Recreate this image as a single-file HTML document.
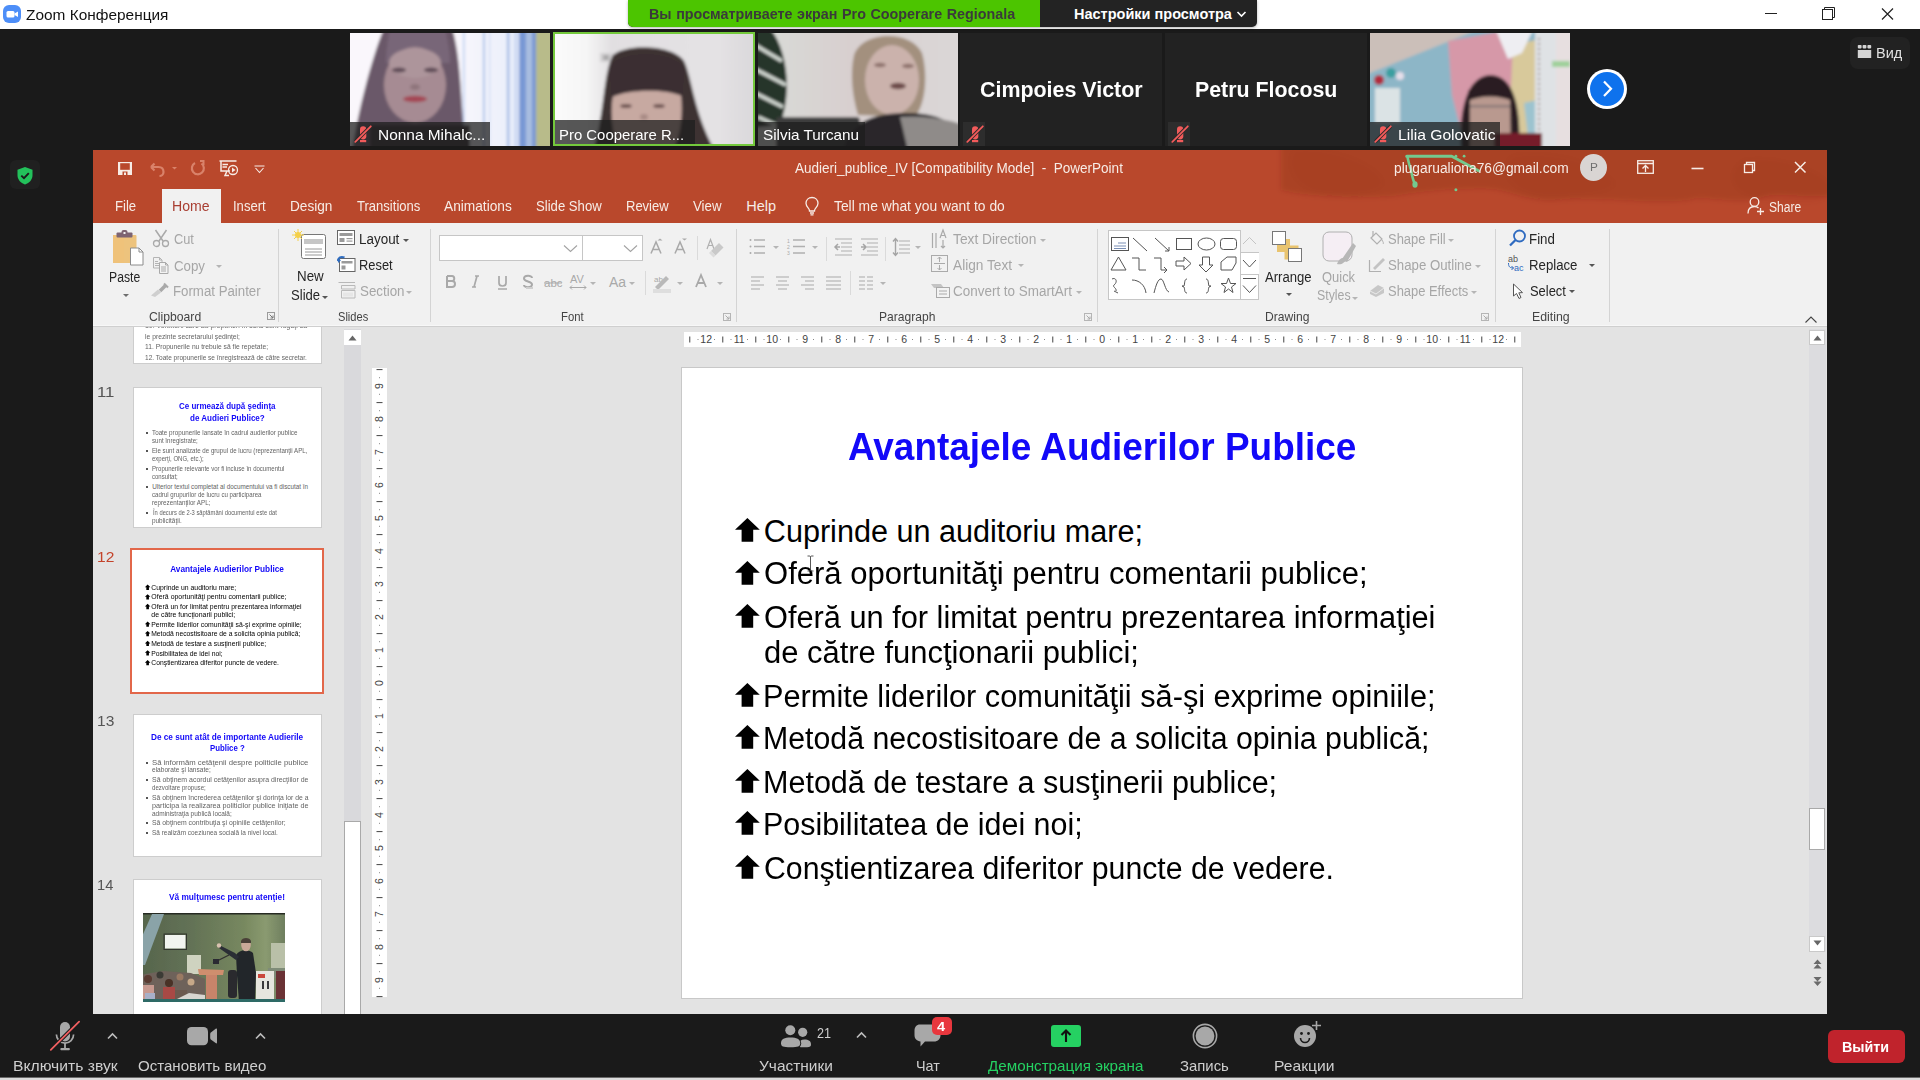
<!DOCTYPE html>
<html><head><meta charset="utf-8">
<style>
*{margin:0;padding:0;box-sizing:border-box}
html,body{width:1920px;height:1080px;overflow:hidden;background:#1a1a1a;font-family:"Liberation Sans",sans-serif}
.a{position:absolute}
.t{position:absolute;white-space:nowrap;line-height:1;transform-origin:0 0}
svg{position:absolute;overflow:visible}
.tile{position:absolute;top:33px;width:200px;height:113px;overflow:hidden;background:#222}
.nlab{position:absolute;left:0;bottom:0;height:24px;background:rgba(30,30,30,.74)}
</style></head><body>
<div class="a" style="left:0;top:0;width:1920px;height:29px;background:#fff"></div>
<div class="a" style="left:3px;top:5px;width:18px;height:18px;border-radius:6px;background:#4d8ef8"></div>
<svg style="left:3px;top:5px" width="18" height="18"><rect x="3.5" y="6" width="8" height="6.5" rx="1.5" fill="#fff"/><path d="M11.5 8.5 L15 6.5 V12 L11.5 10 Z" fill="#fff"/></svg>
<svg style="left:1760px;top:0" width="160" height="29">
 <path d="M5 13.5 H17" stroke="#222" stroke-width="1"/>
 <rect x="62.5" y="9.5" width="10" height="10" fill="none" stroke="#222" stroke-width="1"/>
 <path d="M64.5 9.5 V7.5 H74.5 V17.5 H72.5" fill="none" stroke="#222" stroke-width="1"/>
 <path d="M122 8.5 L133 19.5 M133 8.5 L122 19.5" stroke="#222" stroke-width="1.2"/>
</svg>
<div class="a" style="left:628px;top:0;width:629px;height:27px;border-radius:0 0 5px 5px;background:#232323;box-shadow:0 1px 3px rgba(0,0,0,.3)"></div>
<div class="a" style="left:628px;top:0;width:412px;height:27px;border-radius:0 0 0 5px;background:#4cc500"></div>
<svg style="left:1236px;top:10px" width="12" height="8"><path d="M1.5 2 L5.5 6 L9.5 2" fill="none" stroke="#fff" stroke-width="1.6"/></svg>
<div class="t" id="t0" style="left:25.99px;top:7.38px;font-size:15.50px;color:#111;font-weight:normal;transform:scaleX(0.9943);">Zoom Конференция</div><div class="t" id="t1" style="left:649.05px;top:6.30px;font-size:15.00px;color:#3a3a3a;font-weight:bold;transform:scaleX(0.9556);white-space:pre;word-spacing:0.6px;">Вы просматриваете экран Pro Cooperare Regionala</div><div class="t" id="t2" style="left:1073.99px;top:6.73px;font-size:14.50px;color:#fff;font-weight:bold;">Настройки просмотра</div>
<div class="tile" style="left:350px;background:#f9f6fb">
 <svg style="left:0;top:0" width="200" height="113"><defs><filter id="bl1" x="-5%" y="-5%" width="110%" height="110%"><feGaussianBlur stdDeviation="1.4"/></filter><linearGradient id="g1" x1="0" x2="1"><stop offset="0" stop-color="#f8f6fc"/><stop offset="0.6" stop-color="#eef1fb"/><stop offset="1" stop-color="#dfe8f8"/></linearGradient></defs>
 <g filter="url(#bl1)">
 <rect x="-5" y="-5" width="210" height="123" fill="#faf7fc"/>
 <rect x="108" y="-5" width="70" height="123" fill="url(#g1)"/>
 <rect x="113" y="-5" width="1.6" height="123" fill="#b9cdf0"/><rect x="133" y="-5" width="2" height="123" fill="#a9c1ea"/><rect x="139" y="-5" width="1.2" height="123" fill="#c9d8f4"/>
 <rect x="157" y="-5" width="2.2" height="123" fill="#9db6e4"/><rect x="165" y="-5" width="1.6" height="123" fill="#b3c6ec"/>
 <rect x="169" y="-5" width="18" height="123" fill="#7898d4"/><rect x="176" y="-5" width="6" height="123" fill="#a9bde0"/>
 <rect x="186" y="-5" width="20" height="123" fill="#b8bb8a"/>
 <path d="M34 -5 L102 -5 C110 20 111 60 115 118 L2 118 C8 80 20 30 34 -5 Z" fill="#6b5869"/>
 <path d="M40 -5 L95 -5 C98 10 100 20 100 30 L36 30 C36 18 38 8 40 -5Z" fill="#786678"/>
 <ellipse cx="65" cy="52" rx="31" ry="38" fill="#a68b93"/>
 <ellipse cx="65" cy="30" rx="26" ry="15" fill="#ad959b"/>
 <ellipse cx="49" cy="37" rx="7" ry="2.5" fill="#5f4b56"/><ellipse cx="81" cy="37" rx="7" ry="2.5" fill="#5f4b56"/>
 <ellipse cx="65" cy="54" rx="5" ry="3" fill="#8e747c"/>
 <ellipse cx="65" cy="66" rx="12" ry="3.2" fill="#a44755"/>
 <rect x="20" y="92" width="100" height="26" fill="#3c3037"/>
 </g></svg>
 <div class="nlab" style="width:140px"></div>
 <svg style="left:3px;top:92px" width="22" height="22"><rect x="7" y="1.2" width="6.3" height="13.2" rx="3.15" fill="#f25b5b"/><rect x="7" y="15" width="6.2" height="2.2" fill="#f25b5b"/><path d="M2.3 16.8 L17.8 1.3" stroke="#2a2a2a" stroke-width="3.6"/><path d="M2.3 16.8 L17.8 1.3" stroke="#f25b5b" stroke-width="1.8" stroke-linecap="round"/></svg>
</div>
<div class="tile" style="left:553px;width:202px;height:114px;top:32px;border:2px solid #74c93c;background:#e3e0e3">
 <svg style="left:-2px;top:-1px" width="202" height="114"><defs><filter id="bl2" x="-5%" y="-5%" width="110%" height="110%"><feGaussianBlur stdDeviation="1.5"/></filter><linearGradient id="g2" x1="0" x2="1"><stop offset="0" stop-color="#fbfbfb"/><stop offset="0.18" stop-color="#f6f6f6"/><stop offset="0.3" stop-color="#e1dfe1"/><stop offset="0.8" stop-color="#e4e2e4"/><stop offset="1" stop-color="#d9d7da"/></linearGradient></defs>
 <g filter="url(#bl2)">
 <rect x="-5" y="-5" width="212" height="124" fill="url(#g2)"/>
 <rect x="47" y="20" width="13" height="9" fill="#d3d1d3"/><rect x="50" y="22" width="6" height="5" fill="#a9a7a9"/>
 <path d="M60 22 C75 10 120 12 131 28 C139 45 141 80 162 118 L40 118 C52 80 50 40 60 22 Z" fill="#3c3033"/>
 <path d="M60 62 C70 54 118 54 128 62 C131 90 124 113 118 118 L66 118 C59 100 57 80 60 62Z" fill="#c7a9a1"/>
 <path d="M57 34 C68 17 120 17 131 36 L129 63 C112 56 78 56 59 64 Z" fill="#3a2e31"/>
 <ellipse cx="73" cy="73" rx="6" ry="2" fill="#6d5150"/><ellipse cx="106" cy="73" rx="6" ry="2" fill="#6d5150"/>
 <ellipse cx="91" cy="84" rx="4" ry="3" fill="#a88a84"/>
 </g></svg>
 <div class="nlab" style="width:140px"></div>
</div>
<div class="tile" style="left:758px;background:#d9d6d7">
 <svg style="left:0;top:0" width="200" height="113"><defs><filter id="bl3" x="-5%" y="-5%" width="110%" height="110%"><feGaussianBlur stdDeviation="1.4"/></filter><linearGradient id="g3" x1="0" x2="1"><stop offset="0" stop-color="#d9ddd8"/><stop offset="0.45" stop-color="#d8cfcf"/><stop offset="1" stop-color="#dad7d7"/></linearGradient></defs>
 <g filter="url(#bl3)">
 <rect x="-5" y="-5" width="210" height="123" fill="url(#g3)"/>
 <path d="M-5 -5 L12 -5 C30 18 34 60 22 92 L-5 95 Z" fill="#27352a"/>
 <path d="M-3 12 L24 28 M-3 36 L28 52 M-3 60 L25 74 M0 84 L18 92" stroke="#d5dbd5" stroke-width="3.5"/>
 <rect x="18" y="84" width="84" height="34" rx="4" fill="#3d3c3e"/>
 <path d="M96 22 C104 -2 152 -4 164 20 C171 45 166 76 156 84 L100 82 C94 62 92 40 96 22 Z" fill="#a3907e"/>
 <ellipse cx="134" cy="47" rx="27" ry="35" fill="#cbb2ac"/>
 <ellipse cx="122" cy="32" rx="6" ry="2.2" fill="#8c706a"/><ellipse cx="150" cy="33" rx="6" ry="2.2" fill="#8c706a"/>
 <ellipse cx="140" cy="53" rx="8" ry="3.2" fill="#6d4c4a"/>
 <path d="M84 118 C94 90 110 80 150 80 C176 80 205 88 205 118 Z" fill="#29282a"/>
 <path d="M142 84 C165 82 190 86 205 92 L205 118 L150 118 C146 100 144 92 142 84Z" fill="#8f8b89"/>
 </g></svg>
 <div class="nlab" style="width:107px"></div>
</div>
<div class="tile" style="left:960px;width:202px;background:#222">
 <div class="a" style="left:2.5px;top:88.5px;width:22.5px;height:24.5px;background:#2d2d2d"></div>
 <svg style="left:5px;top:92px" width="22" height="22"><rect x="7" y="1.2" width="6.3" height="13.2" rx="3.15" fill="#f25b5b"/><rect x="7" y="15" width="6.2" height="2.2" fill="#f25b5b"/><path d="M2.3 16.8 L17.8 1.3" stroke="#2a2a2a" stroke-width="3.6"/><path d="M2.3 16.8 L17.8 1.3" stroke="#f25b5b" stroke-width="1.8" stroke-linecap="round"/></svg>
</div>
<div class="tile" style="left:1165px;width:202px;background:#222">
 <div class="a" style="left:2.5px;top:88.5px;width:22.5px;height:24.5px;background:#2d2d2d"></div>
 <svg style="left:5px;top:92px" width="22" height="22"><rect x="7" y="1.2" width="6.3" height="13.2" rx="3.15" fill="#f25b5b"/><rect x="7" y="15" width="6.2" height="2.2" fill="#f25b5b"/><path d="M2.3 16.8 L17.8 1.3" stroke="#2a2a2a" stroke-width="3.6"/><path d="M2.3 16.8 L17.8 1.3" stroke="#f25b5b" stroke-width="1.8" stroke-linecap="round"/></svg>
</div>
<div class="tile" style="left:1370px;background:#c9b8b8">
 <svg style="left:0;top:0" width="200" height="113"><defs><filter id="bl6" x="-5%" y="-5%" width="110%" height="110%"><feGaussianBlur stdDeviation="1.5"/></filter></defs>
 <g filter="url(#bl6)">
 <rect x="-5" y="-5" width="210" height="123" fill="#cbbfb9"/>
 <path d="M-5 42 L112 -5 L205 -5 L205 118 L-5 118 Z" fill="#8db6c7"/>
 <path d="M78 8 L150 -5 L154 92 L96 118 L82 62 Z" fill="#d698a8"/>
 <path d="M143 12 L170 6 L173 118 L138 118 Z" fill="#d8c99b"/>
 <path d="M154 70 L172 66 L172 100 L158 104 Z" fill="#9cc3cf"/>
 <path d="M125 -5 L164 -5 L152 20 L138 26 Z" fill="#eeeef2"/>
 <rect x="165" y="-5" width="21" height="123" fill="#dfe2e5"/>
 <path d="M169 5 V110" stroke="#7a5a5a" stroke-width="1.5" stroke-dasharray="2 3"/>
 <rect x="186" y="-5" width="20" height="123" fill="#e7dfe0"/>
 <rect x="182" y="28" width="18" height="6" fill="#9fd09a"/>
 <circle cx="9" cy="47" r="5" fill="#b02a3e"/><circle cx="21" cy="40" r="5" fill="#3b9fa0"/><circle cx="30" cy="43" r="4" fill="#e6dfea"/>
 <rect x="5" y="55" width="25" height="35" fill="#dbe3e5"/>
 <path d="M91 118 C89 80 95 44 120 42 C146 42 151 80 149 118 Z" fill="#2a1e22"/>
 <path d="M100 66 C106 56 134 56 140 66 L141 118 L100 118 Z" fill="#b9998f"/>
 <path d="M98 58 C108 48 132 48 142 58 L142 68 C130 62 110 62 98 68Z" fill="#2a1e22"/>
 <rect x="100" y="72" width="40" height="2.5" fill="#8a7a78"/>
 <rect x="124" y="100" width="48" height="18" fill="#761a2a"/>
 </g></svg>
 <div class="nlab" style="width:130px"></div>
 <svg style="left:3px;top:92px" width="22" height="22"><rect x="7" y="1.2" width="6.3" height="13.2" rx="3.15" fill="#f25b5b"/><rect x="7" y="15" width="6.2" height="2.2" fill="#f25b5b"/><path d="M2.3 16.8 L17.8 1.3" stroke="#2a2a2a" stroke-width="3.6"/><path d="M2.3 16.8 L17.8 1.3" stroke="#f25b5b" stroke-width="1.8" stroke-linecap="round"/></svg>
</div>
<div class="a" style="left:1587px;top:69px;width:40px;height:40px;border-radius:50%;background:#fff"></div>
<div class="a" style="left:1590px;top:72px;width:34px;height:34px;border-radius:50%;background:#0e72ed"></div>
<svg style="left:1587px;top:69px" width="40" height="40"><path d="M17 12.5 L24 19.8 L17 27" fill="none" stroke="#fff" stroke-width="2.2"/></svg>
<div class="a" style="left:1850px;top:37px;width:60px;height:32px;border-radius:8px;background:#222"></div>
<svg style="left:1857px;top:44px" width="16" height="16"><rect x="0.8" y="6" width="13.4" height="8" fill="#d4d4d4"/><rect x="0.8" y="1" width="3.8" height="3.4" rx="0.8" fill="#d4d4d4"/><rect x="5.6" y="1" width="3.8" height="3.4" rx="0.8" fill="#d4d4d4"/><rect x="10.4" y="1" width="3.8" height="3.4" rx="0.8" fill="#d4d4d4"/></svg>
<div class="a" style="left:10px;top:160px;width:30px;height:29px;border-radius:6px;background:#202020"></div>
<svg style="left:16px;top:166px" width="18" height="20"><path d="M9 1 L16.5 3.8 V9 C16.5 13.5 13.5 17 9 18.5 C4.5 17 1.5 13.5 1.5 9 V3.8 Z" fill="#23c15b"/><path d="M5.3 9.6 L8 12.2 L12.8 7.2" fill="none" stroke="#1a1a1a" stroke-width="1.9"/></svg>
<div class="t" id="t3" style="left:377.57px;top:126.80px;font-size:15.00px;color:#fff;font-weight:normal;transform:scaleX(1.0289);">Nonna Mihalc...</div><div class="t" id="t4" style="left:558.61px;top:126.80px;font-size:15.00px;color:#fff;font-weight:normal;transform:scaleX(0.9942);">Pro Cooperare R...</div><div class="t" id="t5" style="left:763.00px;top:126.80px;font-size:15.00px;color:#fff;font-weight:normal;transform:scaleX(1.0198);">Silvia Turcanu</div><div class="t" id="t6" style="left:1397.96px;top:126.80px;font-size:15.00px;color:#fff;font-weight:normal;transform:scaleX(1.0444);">Lilia Golovatic</div><div class="t" id="t7" style="left:979.99px;top:78.78px;font-size:22.00px;color:#fff;font-weight:bold;transform:scaleX(0.9732);">Cimpoies Victor</div><div class="t" id="t8" style="left:1194.83px;top:78.78px;font-size:22.00px;color:#fff;font-weight:bold;transform:scaleX(0.9706);">Petru Flocosu</div><div class="t" id="t9" style="left:1875.53px;top:44.50px;font-size:15.00px;color:#e0e0e0;font-weight:normal;transform:scaleX(0.9665);">Вид</div><div class="a" style="left:93px;top:150px;width:1734px;height:864px;background:#e3e3e3"></div>
<div class="a" style="left:93px;top:150px;width:1734px;height:73px;background:#b9482c;overflow:hidden">
 <svg style="left:0;top:0" width="1734" height="73"><defs><filter id="wc" x="-5%" y="-20%" width="110%" height="140%"><feGaussianBlur stdDeviation="2.5"/></filter></defs>
 <g filter="url(#wc)">
 <path d="M1188 -5 H1740 V45 C1707 50 1687 40 1667 48 C1647 55 1607 45 1597 50 C1557 55 1507 46 1467 50 C1437 53 1417 40 1397 39 C1357 38 1327 42 1302 46 C1257 49 1207 46 1188 40 Z" fill="rgba(105,32,18,0.19)"/>
 <path d="M1200 0 C1230 -5 1280 10 1290 30 C1295 42 1260 48 1230 44 C1205 40 1190 20 1200 0Z" fill="rgba(105,32,18,0.04)"/>
 <path d="M1420 5 C1460 0 1500 10 1520 30 C1530 42 1490 48 1450 46 C1420 44 1400 20 1420 5Z" fill="rgba(105,32,18,0.04)"/>
 <path d="M1650 10 C1690 5 1730 20 1740 40 C1740 55 1700 55 1670 50 C1640 45 1630 25 1650 10Z" fill="rgba(105,32,18,0.05)"/>
 </g></svg>
</div>
<div class="a" style="left:162px;top:189px;width:59px;height:34px;background:#f1f1f1"></div>
<svg style="left:117px;top:161px" width="16" height="15">
 <rect x="1" y="1" width="14" height="13" fill="#f7ece6"/>
 <rect x="3.2" y="2.2" width="9.6" height="6.6" fill="#b9482c"/>
 <rect x="5.5" y="10.5" width="5" height="3.5" fill="#b9482c"/>
 <rect x="7" y="11.5" width="2" height="2.5" fill="#f7ece6"/>
</svg>
<svg style="left:148px;top:161px" width="32" height="17">
 <path d="M3 6 L6.5 2.5 M3 6 L6.5 9.5 M3 6 H10.5 C13.5 6 15.5 8 15.5 11 C15.5 13.5 13.5 15 11.5 15" fill="none" stroke="#d9826a" stroke-width="2.2"/>
 <path d="M24 6 H29 L26.5 8.5Z" fill="#d9826a"/>
</svg>
<svg style="left:189px;top:160px" width="17" height="17">
 <path d="M12.5 3.5 A6 6 0 1 1 6 3" fill="none" stroke="#d9826a" stroke-width="2.2"/>
 <path d="M11 1 L14.5 1 L14.5 5" fill="none" stroke="#d9826a" stroke-width="2"/>
</svg>
<svg style="left:219px;top:160px" width="20" height="17">
 <path d="M0.5 1 H17.5 M2 1 V11 H11 M3.5 4.5 H9 M3.5 7 H8 M8 11 L6 15.5 H10" fill="none" stroke="#f7ece6" stroke-width="1.5"/>
 <circle cx="14" cy="10" r="4.5" fill="none" stroke="#f7ece6" stroke-width="1.3"/>
 <path d="M13 7.5 L16.5 10 L13 12.5Z" fill="#f7ece6"/>
</svg>
<svg style="left:254px;top:165px" width="12" height="9"><path d="M0.5 1 H10.5 M1.5 3 L5.5 7.5 L9.5 3" fill="none" stroke="#f7ece6" stroke-width="1.1"/></svg>
<svg style="left:804px;top:196px" width="16" height="20"><path d="M8 1.5 C4.5 1.5 2 4 2 7.3 C2 9.5 3.3 10.8 4.5 12.3 C5.3 13.3 5.5 14 5.5 15 H10.5 C10.5 14 10.7 13.3 11.5 12.3 C12.7 10.8 14 9.5 14 7.3 C14 4 11.5 1.5 8 1.5Z M6 17 H10 M6.5 18.8 H9.5" fill="none" stroke="#f7ece6" stroke-width="1.3"/></svg>
<svg style="left:1400px;top:152px" width="90" height="45">
 <path d="M6.7 4.3 H51.7 L78.5 18.8" fill="none" stroke="#74c98e" stroke-width="3" stroke-linecap="round" stroke-linejoin="round"/>
 <path d="M7.5 4.3 C8 9 9.5 13 11 18 C12 23 12.5 27 14.5 31" fill="none" stroke="#74c98e" stroke-width="2.6" stroke-linecap="round"/>
 <ellipse cx="15" cy="32.5" rx="2.6" ry="3.2" fill="#74c98e"/>
 <circle cx="55.9" cy="4.2" r="1.4" fill="#74c98e"/><circle cx="64.1" cy="4.2" r="1.4" fill="#74c98e"/><circle cx="55.9" cy="37.8" r="1.5" fill="#74c98e"/>
</svg>
<div class="a" style="left:1580px;top:154px;width:27px;height:27px;border-radius:50%;background:#d9d5d3"></div>
<svg style="left:1637px;top:160px" width="18" height="15"><rect x="0.7" y="0.7" width="15.6" height="12.6" fill="none" stroke="#f7ece6" stroke-width="1.3"/><path d="M0.7 3.5 H16.3 M8.5 12 V6 M5.5 8.5 L8.5 5.5 L11.5 8.5" fill="none" stroke="#f7ece6" stroke-width="1.3"/></svg>
<svg style="left:1690px;top:160px" width="120" height="16">
 <path d="M1.5 8.5 H13.5" stroke="#f7ece6" stroke-width="1.6"/>
 <rect x="54.5" y="4.5" width="8" height="8" fill="none" stroke="#f7ece6" stroke-width="1.3"/>
 <path d="M56.5 4.5 V2.5 H64.5 V10.5 H62.5" fill="none" stroke="#f7ece6" stroke-width="1.3"/>
 <path d="M105 2 L115.5 12.5 M115.5 2 L105 12.5" stroke="#f7ece6" stroke-width="1.5"/>
</svg>
<svg style="left:1747px;top:196px" width="18" height="20"><circle cx="7.5" cy="6" r="4.3" fill="none" stroke="#f7ece6" stroke-width="1.3"/><path d="M1 17.5 C1 12.5 4 10.5 7.5 10.5 C9 10.5 10.5 11 11.5 12" fill="none" stroke="#f7ece6" stroke-width="1.3"/><path d="M13.5 12 V19 M10 15.5 H17" stroke="#f7ece6" stroke-width="1.3"/></svg>
<div class="t" id="t10" style="left:795.00px;top:161.05px;font-size:14.00px;color:#f7ece6;font-weight:normal;transform:scaleX(0.9665);white-space:pre;">Audieri_publice_IV [Compatibility Mode]  -  PowerPoint</div><div class="t" id="t11" style="left:1394.40px;top:160.85px;font-size:14.00px;color:#f7ece6;font-weight:normal;transform:scaleX(0.9832);">plugarualiona76@gmail.com</div><div class="t" id="t12" style="left:1590.00px;top:162.19px;font-size:11.00px;color:#707070;font-weight:normal;transform:scaleX(1.0714);">P</div><div class="t" id="t13" style="left:834.00px;top:199.15px;font-size:14.00px;color:#f7ece6;font-weight:normal;transform:scaleX(0.9886);">Tell me what you want to do</div><div class="t" id="t14" style="left:1768.60px;top:199.75px;font-size:14.00px;color:#f7ece6;font-weight:normal;transform:scaleX(0.8623);">Share</div><div class="t" id="t15" style="left:114.89px;top:198.73px;font-size:14.50px;color:#f7ece6;font-weight:normal;transform:scaleX(0.9058);">File</div><div class="t" id="t16" style="left:233.30px;top:198.73px;font-size:14.50px;color:#f7ece6;font-weight:normal;transform:scaleX(0.8997);">Insert</div><div class="t" id="t17" style="left:290.06px;top:198.73px;font-size:14.50px;color:#f7ece6;font-weight:normal;transform:scaleX(0.9394);">Design</div><div class="t" id="t18" style="left:356.90px;top:198.73px;font-size:14.50px;color:#f7ece6;font-weight:normal;transform:scaleX(0.8998);">Transitions</div><div class="t" id="t19" style="left:444.20px;top:198.73px;font-size:14.50px;color:#f7ece6;font-weight:normal;transform:scaleX(0.9457);">Animations</div><div class="t" id="t20" style="left:536.30px;top:198.73px;font-size:14.50px;color:#f7ece6;font-weight:normal;transform:scaleX(0.9060);">Slide Show</div><div class="t" id="t21" style="left:626.10px;top:198.73px;font-size:14.50px;color:#f7ece6;font-weight:normal;transform:scaleX(0.8965);">Review</div><div class="t" id="t22" style="left:693.40px;top:198.73px;font-size:14.50px;color:#f7ece6;font-weight:normal;transform:scaleX(0.9150);">View</div><div class="t" id="t23" style="left:746.20px;top:198.73px;font-size:14.50px;color:#f7ece6;font-weight:normal;">Help</div><div class="t" id="t24" style="left:171.73px;top:198.73px;font-size:14.50px;color:#a93f33;font-weight:normal;transform:scaleX(0.9704);">Home</div><div class="a" style="left:93px;top:223px;width:1734px;height:103px;background:#f1f1f1"></div>
<div class="a" style="left:93px;top:325px;width:1734px;height:1px;background:#f7f7f7"></div><div class="a" style="left:93px;top:326px;width:1734px;height:1px;background:#cfcfcf"></div>
<div class="a" style="left:277.5px;top:229px;width:1px;height:93px;background:#d4d4d4"></div><div class="a" style="left:429.5px;top:229px;width:1px;height:93px;background:#d4d4d4"></div><div class="a" style="left:735.5px;top:229px;width:1px;height:93px;background:#d4d4d4"></div><div class="a" style="left:1097px;top:229px;width:1px;height:93px;background:#d4d4d4"></div><div class="a" style="left:1495px;top:229px;width:1px;height:93px;background:#d4d4d4"></div><div class="a" style="left:1608.5px;top:229px;width:1px;height:93px;background:#d4d4d4"></div><svg style="left:112px;top:230px" width="34" height="37">
 <rect x="1" y="5" width="23.5" height="28" rx="1" fill="#edc37d"/>
 <rect x="1" y="5" width="11" height="28" fill="#efc27a"/>
 <rect x="4.5" y="2.5" width="16" height="5" rx="1" fill="#7d6472"/>
 <rect x="9.5" y="0" width="6" height="5" rx="2" fill="#7d6472"/><rect x="11.5" y="2" width="2" height="2" fill="#f3f3f3"/>
 <path d="M18.5 18 H27 L31 22 V35 H18.5Z" fill="#fff" stroke="#8c8c8c" stroke-width="1"/><path d="M27 18 V22 H31" fill="none" stroke="#8c8c8c" stroke-width="1"/>
</svg>
<svg style="left:152px;top:229px" width="18" height="19"><path d="M3.5 1 L11 12 M14.5 1 L7 12" stroke="#a9a9a9" stroke-width="1.5"/><circle cx="4.5" cy="14.5" r="3" fill="none" stroke="#a9a9a9" stroke-width="1.3"/><circle cx="13.5" cy="14.5" r="3" fill="none" stroke="#a9a9a9" stroke-width="1.3"/></svg>
<svg style="left:152px;top:256px" width="18" height="19"><path d="M1.5 1.5 H7.5 L10 4 V12 H1.5Z M7.5 1.5 V4 H10" fill="none" stroke="#b4b4b4" stroke-width="1"/><path d="M3 5.5 H6 M3 7.5 H8 M3 9.5 H8" stroke="#b4b4b4"/><path d="M7.5 6.5 H13.5 L16 9 V17.5 H7.5Z M13.5 6.5 V9 H16" fill="#f3f3f3" stroke="#a9a9a9" stroke-width="1"/><path d="M9 11 H14 M9 13 H14 M9 15 H14" stroke="#a9a9a9"/></svg>
<svg style="left:150px;top:282px" width="20" height="16"><path d="M10 9 L16 3" stroke="#a9a9a9" stroke-width="3.5"/><path d="M14 1.5 L18 5.5" stroke="#a9a9a9" stroke-width="2"/><path d="M1 13.5 L8 7.5 L11 10.5 L5 15Z" fill="#cfcfcf"/></svg>
<svg style="left:122.5px;top:293.5px" width="7" height="4"><path d="M0 0 H6 L3 3Z" fill="#6d6d6d"/></svg><svg style="left:216px;top:265px" width="7" height="4"><path d="M0 0 H6 L3 3Z" fill="#b5b5b5"/></svg><svg style="left:267px;top:312px" width="9" height="9"><rect x="0.5" y="0.5" width="7" height="7" fill="none" stroke="#9b9b9b" stroke-width="1"/><path d="M2.5 2.5 L6 6 M6 3.5 V6 H3.5" fill="none" stroke="#777" stroke-width="1"/></svg><div class="t" id="t25" style="left:109.13px;top:270.45px;font-size:14.00px;color:#262626;font-weight:normal;transform:scaleX(0.8711);">Paste</div><div class="t" id="t26" style="left:174.00px;top:232.15px;font-size:14.00px;color:#a6a6a6;font-weight:normal;transform:scaleX(0.9134);">Cut</div><div class="t" id="t27" style="left:174.00px;top:258.85px;font-size:14.00px;color:#a6a6a6;font-weight:normal;transform:scaleX(0.9485);">Copy</div><div class="t" id="t28" style="left:173.05px;top:283.65px;font-size:14.00px;color:#a6a6a6;font-weight:normal;transform:scaleX(0.9464);">Format Painter</div><div class="t" id="t29" style="left:149.30px;top:309.57px;font-size:13.50px;color:#444;font-weight:normal;transform:scaleX(0.9027);">Clipboard</div><svg style="left:292px;top:229px" width="36" height="32">
 <rect x="9.5" y="5.5" width="24" height="24" rx="2" fill="#fff" stroke="#777" stroke-width="1"/>
 <rect x="12" y="10" width="19" height="5" fill="#c6c6c6"/>
 <path d="M13 20 H30 M13 23 H30 M13 26 H30" stroke="#8c8c8c" stroke-width="0.9"/>
 <circle cx="6" cy="6" r="3" fill="#f4d04a"/><path d="M6 0 V12 M0 6 H12 M2 2 L10 10 M10 2 L2 10" stroke="#f4d04a" stroke-width="1"/>
</svg>
<svg style="left:337px;top:230px" width="20" height="17"><rect x="0.5" y="0.5" width="17" height="14" fill="#fff" stroke="#666" stroke-width="1"/><rect x="2.5" y="3" width="13" height="3" fill="#9a9a9a"/><rect x="2.5" y="8" width="5" height="4" fill="#9a9a9a"/><rect x="9.5" y="8" width="6" height="1.2" fill="#9a9a9a"/><rect x="9.5" y="10.5" width="6" height="1.2" fill="#9a9a9a"/></svg>
<svg style="left:337px;top:255px" width="20" height="18"><rect x="2.5" y="3.5" width="15.5" height="13" fill="#fff" stroke="#666" stroke-width="1"/><rect x="4.5" y="6" width="11" height="2.5" fill="#9a9a9a"/><rect x="4.5" y="10.5" width="4" height="4" fill="#9a9a9a"/><path d="M1 6 C1 2.5 4 1 7.5 2.5" fill="none" stroke="#2e6cc0" stroke-width="2"/><path d="M0 4 L1.5 8 L4 5Z" fill="#2e6cc0"/></svg>
<svg style="left:338px;top:281px" width="20" height="18"><path d="M0.5 1.5 H17 M3.5 4.5 H17 V8 H3.5Z M3.5 9.5 H17 V17 H3.5Z" fill="none" stroke="#b9b9b9" stroke-width="1"/><path d="M5 11.5 H15 V15.5 H5Z" fill="#e6e6e6"/></svg>
<svg style="left:322px;top:296px" width="7" height="4"><path d="M0 0 H6 L3 3Z" fill="#555"/></svg><svg style="left:403px;top:238.5px" width="7" height="4"><path d="M0 0 H6 L3 3Z" fill="#555"/></svg><svg style="left:406px;top:291px" width="7" height="4"><path d="M0 0 H6 L3 3Z" fill="#b5b5b5"/></svg><div class="t" id="t30" style="left:296.55px;top:269.45px;font-size:14.00px;color:#262626;font-weight:normal;transform:scaleX(0.9535);">New</div><div class="t" id="t31" style="left:291.30px;top:287.75px;font-size:14.00px;color:#262626;font-weight:normal;transform:scaleX(0.9348);">Slide</div><div class="t" id="t32" style="left:358.54px;top:232.15px;font-size:14.00px;color:#262626;font-weight:normal;transform:scaleX(0.9600);">Layout</div><div class="t" id="t33" style="left:358.58px;top:257.95px;font-size:14.00px;color:#262626;font-weight:normal;transform:scaleX(0.9192);">Reset</div><div class="t" id="t34" style="left:359.50px;top:283.65px;font-size:14.00px;color:#a6a6a6;font-weight:normal;transform:scaleX(0.9540);">Section</div><div class="t" id="t35" style="left:338.00px;top:309.57px;font-size:13.50px;color:#444;font-weight:normal;transform:scaleX(0.8212);">Slides</div><div class="a" style="left:439px;top:235px;width:204px;height:26px;background:#fff;border:1px solid #c6c6c6"></div>
<div class="a" style="left:582px;top:236px;width:1px;height:24px;background:#c6c6c6"></div>
<svg style="left:563px;top:244px" width="140" height="9"><path d="M1 1.5 L7.5 7.5 L14 1.5" fill="none" stroke="#a3a3a3" stroke-width="1.1"/><path d="M61 1.5 L67.5 7.5 L74 1.5" fill="none" stroke="#a3a3a3" stroke-width="1.1"/></svg>
<div class="a" style="left:697px;top:236px;width:1px;height:24px;background:#dadada"></div>
<div class="a" style="left:645px;top:271px;width:1px;height:24px;background:#dadada"></div>
<svg style="left:648px;top:238px" width="80" height="18">
 <path d="M3 15.5 L8 4 L13 15.5 M5 11.5 H11" fill="none" stroke="#a9a9a9" stroke-width="1.5"/><path d="M9.5 2.5 L12 0.5 L14.5 2.5Z" fill="#a9a9a9"/>
 <path d="M27 15.5 L32 4 L37 15.5 M29 11.5 H35" fill="none" stroke="#a9a9a9" stroke-width="1.5"/><path d="M34 0.5 L36.5 2.5 L39 0.5Z" fill="#a9a9a9"/>
 <path d="M59 11 L62.5 1.5 L66 11 M60.3 7.5 H64.7" fill="none" stroke="#b0b0b0" stroke-width="1.2"/><path d="M63 13 L71 5 L75.5 9.5 L67.5 17.5Z" fill="#c9c9c9"/><path d="M61 15 L63 13 L67.5 17.5 L65.5 19.5Z" fill="#dcdcdc"/>
</svg>
<svg style="left:444px;top:272px" width="290" height="22">
 <path d="M3 4 H8 C11 4 11 9 8 9 H3 M8 9 C12 9 12 15 8 15 H3 V4" fill="none" stroke="#a9a9a9" stroke-width="2"/>
 <path d="M33 4 L30 15 M31 4 H35 M28 15 H32" stroke="#a9a9a9" stroke-width="1.7"/>
 <path d="M55 4 V11 C55 15 62 15 62 11 V4 M54 17 H63" fill="none" stroke="#a9a9a9" stroke-width="1.7"/>
 <path d="M88 6 C88 3 80 3 80 6.5 C80 10 88 9 88 12.5 C88 16 80 16 80 13" fill="none" stroke="#a9a9a9" stroke-width="2"/><path d="M82 16 H89" stroke="#cfcfcf" stroke-width="2"/>
 <text x="100" y="15" font-size="11.5" fill="#a9a9a9" font-family="Liberation Sans">abc</text><path d="M100 11 H118" stroke="#a9a9a9" stroke-width="1"/>
 <text x="126" y="11" font-size="11" fill="#a9a9a9" font-family="Liberation Sans">AV</text><path d="M126 15.5 H142 M128 13.5 L126 15.5 L128 17.5 M140 13.5 L142 15.5 L140 17.5" fill="none" stroke="#a9a9a9" stroke-width="1"/>
 <text x="165" y="15" font-size="14" fill="#a9a9a9" font-family="Liberation Sans">Aa</text>
 <text x="210" y="10" font-size="8" fill="#a9a9a9" font-family="Liberation Sans">ab</text><path d="M211 15 L222 4 L225 7 L214 18Z" fill="#b9b9b9"/><rect x="209" y="17" width="18" height="4" fill="#dedede"/>
 <path d="M252 15 L257 3 L262 15 M254 11 H260" fill="none" stroke="#a9a9a9" stroke-width="1.8"/>
</svg>
<svg style="left:590px;top:282px" width="7" height="4"><path d="M0 0 H6 L3 3Z" fill="#b5b5b5"/></svg><svg style="left:629px;top:282px" width="7" height="4"><path d="M0 0 H6 L3 3Z" fill="#b5b5b5"/></svg><svg style="left:677px;top:282px" width="7" height="4"><path d="M0 0 H6 L3 3Z" fill="#b5b5b5"/></svg><svg style="left:717px;top:282px" width="7" height="4"><path d="M0 0 H6 L3 3Z" fill="#b5b5b5"/></svg><svg style="left:723px;top:313px" width="9" height="9"><rect x="0.5" y="0.5" width="7" height="7" fill="none" stroke="#b5b5b5" stroke-width="1"/><path d="M2.5 2.5 L6 6 M6 3.5 V6 H3.5" fill="none" stroke="#aaa" stroke-width="1"/></svg><div class="t" id="t36" style="left:561.16px;top:310.37px;font-size:13.50px;color:#444;font-weight:normal;transform:scaleX(0.8377);">Font</div><svg style="left:747px;top:237px" width="180" height="20">
 <circle cx="3.5" cy="3" r="1" fill="#aaa"/><circle cx="3.5" cy="9.5" r="1" fill="#aaa"/><circle cx="3.5" cy="16" r="1" fill="#aaa"/>
 <path d="M7 3 H18 M7 9.5 H18 M7 16 H18" stroke="#b0b0b0" stroke-width="1.3"/>
 <text x="40" y="6" font-size="5" fill="#aaa" font-family="Liberation Sans">1</text><text x="40" y="12" font-size="5" fill="#aaa" font-family="Liberation Sans">2</text><text x="40" y="18" font-size="5" fill="#aaa" font-family="Liberation Sans">3</text>
 <path d="M46 3 H58 M46 9.5 H58 M46 16 H58" stroke="#b0b0b0" stroke-width="1.3"/>
 <path d="M88 2 H105 M94 6 H105 M94 10 H105 M94 14 H105 M88 18 H105" stroke="#b0b0b0" stroke-width="1.2"/><path d="M93 10 H88 M91 7 L88 10 L91 13" fill="none" stroke="#a5a5a5" stroke-width="1.5"/>
 <path d="M114 2 H131 M120 6 H131 M120 10 H131 M120 14 H131 M114 18 H131" stroke="#b0b0b0" stroke-width="1.2"/><path d="M114 10 H119 M116 7 L119 10 L116 13" fill="none" stroke="#a5a5a5" stroke-width="1.5"/>
 <path d="M152 4 H163 M152 8 H163 M152 12 H163 M152 16 H163" stroke="#b0b0b0" stroke-width="1.2"/><path d="M148.5 2 V18 M146 4.5 L148.5 1.5 L151 4.5 M146 15.5 L148.5 18.5 L151 15.5" fill="none" stroke="#a5a5a5" stroke-width="1.4"/>
</svg>
<svg style="left:749px;top:274px" width="140" height="18">
 <path d="M2 3 H15 M2 7 H11 M2 11 H15 M2 15 H11" stroke="#aaa" stroke-width="1.2"/>
 <path d="M27 3 H40 M29 7 H38 M27 11 H40 M29 15 H38" stroke="#aaa" stroke-width="1.2"/>
 <path d="M52 3 H65 M56 7 H65 M52 11 H65 M56 15 H65" stroke="#aaa" stroke-width="1.2"/>
 <path d="M77 3 H92 M77 7 H92 M77 11 H92 M77 15 H92" stroke="#aaa" stroke-width="1.2"/>
 <path d="M110 3 H116 M110 7 H116 M110 11 H116 M110 15 H116 M118 3 H124 M118 7 H124 M118 11 H124 M118 15 H124" stroke="#aaa" stroke-width="1.2"/>
</svg>
<svg style="left:931px;top:229px" width="20" height="72">
 <path d="M1.5 4 V19 M5 4 V19" stroke="#aaa" stroke-width="1.2"/><path d="M9 9 L12 1 L15 9 M10 6.5 H14 M12 11 V19 M10 17 L12 19 L14 17" fill="none" stroke="#aaa" stroke-width="1.2"/>
 <rect x="0.5" y="26.5" width="16" height="16" fill="none" stroke="#aaa" stroke-width="1"/><path d="M3 34.5 H14 M8.5 28 V33 M6.5 30 L8.5 28 L10.5 30 M8.5 36 V41 M6.5 39 L8.5 41 L10.5 39" fill="none" stroke="#aaa" stroke-width="1"/>
 <path d="M0 55 H10 L13 59 H3Z" fill="#c4c4c4"/><rect x="5.5" y="58.5" width="13" height="10" fill="#f3f3f3" stroke="#aaa" stroke-width="1"/><path d="M8 62 H16 M8 65 H16" stroke="#aaa"/>
</svg>
<svg style="left:773px;top:246px" width="7" height="4"><path d="M0 0 H6 L3 3Z" fill="#b5b5b5"/></svg><svg style="left:812px;top:246px" width="7" height="4"><path d="M0 0 H6 L3 3Z" fill="#b5b5b5"/></svg><svg style="left:915px;top:246px" width="7" height="4"><path d="M0 0 H6 L3 3Z" fill="#b5b5b5"/></svg><svg style="left:880px;top:282px" width="7" height="4"><path d="M0 0 H6 L3 3Z" fill="#b5b5b5"/></svg><svg style="left:1040px;top:239px" width="7" height="4"><path d="M0 0 H6 L3 3Z" fill="#b5b5b5"/></svg><svg style="left:1018px;top:264px" width="7" height="4"><path d="M0 0 H6 L3 3Z" fill="#b5b5b5"/></svg><svg style="left:1076px;top:291px" width="7" height="4"><path d="M0 0 H6 L3 3Z" fill="#b5b5b5"/></svg><div class="a" style="left:826px;top:237px;width:1px;height:24px;background:#dadada"></div><div class="a" style="left:885px;top:237px;width:1px;height:24px;background:#dadada"></div><div class="a" style="left:850px;top:271px;width:1px;height:24px;background:#dadada"></div><svg style="left:1084px;top:313px" width="9" height="9"><rect x="0.5" y="0.5" width="7" height="7" fill="none" stroke="#b5b5b5" stroke-width="1"/><path d="M2.5 2.5 L6 6 M6 3.5 V6 H3.5" fill="none" stroke="#aaa" stroke-width="1"/></svg><div class="t" id="t37" style="left:953.00px;top:231.75px;font-size:14.00px;color:#a6a6a6;font-weight:normal;transform:scaleX(0.9831);">Text Direction</div><div class="t" id="t38" style="left:953.00px;top:257.95px;font-size:14.00px;color:#a6a6a6;font-weight:normal;transform:scaleX(0.9785);">Align Text</div><div class="t" id="t39" style="left:953.00px;top:283.95px;font-size:14.00px;color:#a6a6a6;font-weight:normal;transform:scaleX(0.9611);">Convert to SmartArt</div><div class="t" id="t40" style="left:878.61px;top:309.57px;font-size:13.50px;color:#444;font-weight:normal;transform:scaleX(0.8938);">Paragraph</div><div class="a" style="left:1108px;top:230px;width:151px;height:70px;background:#fff;border:1px solid #c6c6c6"></div>
<div class="a" style="left:1240px;top:230px;width:1px;height:70px;background:#c6c6c6"></div>
<div class="a" style="left:1241px;top:230px;width:18px;height:23px;background:#f1f1f1;border-bottom:1px solid #c6c6c6"></div>
<div class="a" style="left:1241px;top:253px;width:18px;height:22px;background:#fff;border-bottom:1px solid #c6c6c6"></div>
<svg style="left:1108px;top:230px" width="152" height="70">
 <g fill="none" stroke="#555" stroke-width="1">
 <rect x="3.5" y="7.5" width="17" height="13"/><path d="M10 13 H18 M6 16 H18 M6 18.5 H18" stroke="#7a8fb5"/>
 <path d="M25 8 L39 21"/><path d="M47 8 L61 21 M57 21 H61 V17"/>
 <rect x="68.5" y="8.5" width="15" height="11"/><ellipse cx="98.5" cy="14" rx="8.5" ry="6"/><rect x="112.5" y="8.5" width="16" height="11" rx="3"/>
 <path d="M3 40 L10.5 27 L18 40Z"/><path d="M24 28 H31 V40 H38"/><path d="M46 28 H53 V40 H59 M56 37 L59 40 L56 43"/>
 <path d="M68 31 H76 V27 L83 33.5 L76 40 V36 H68Z"/><path d="M94.5 27 H101.5 V35 H105 L98 42 L91 35 H94.5Z"/><path d="M113 40 V32 L119 27 H128 V33 L124 40Z"/>
 <path d="M4 49 C8 47 10 52 6 55 C4 57 9 58 8 61 M6 61 L10 63"/><path d="M24 50 C31 50 37 55 38 63"/><path d="M46 63 C48 55 50 49 53 49 C56 49 57 61 61 62"/>
 <path d="M79 49 C76 49 77 54 76 56 L74 56 L76 57 C77 59 76 63 79 63"/><path d="M98 49 C101 49 100 54 101 56 L103 56 L101 57 C100 59 101 63 98 63"/>
 <path d="M120.5 48 L122.5 53.5 L128 53.5 L123.5 57 L125 62.5 L120.5 59 L116 62.5 L117.5 57 L113 53.5 L118.5 53.5Z"/>
 <path d="M135 14 L141.5 7.5 L148 14" stroke="#c4c4c4"/><path d="M135 30 L141.5 37 L148 30"/><path d="M135 48.5 H148" /><path d="M135 55.5 L141.5 62.5 L148 55.5"/>
 </g>
</svg>
<svg style="left:1271px;top:230px" width="36" height="36"><rect x="6" y="9" width="13" height="13" fill="#e9c46f"/><rect x="13.5" y="15.5" width="14" height="14" fill="#e9c46f"/><rect x="1.5" y="1.5" width="13" height="13" fill="#fff" stroke="#777" stroke-width="1"/><rect x="17.5" y="18.5" width="13" height="13" fill="#fff" stroke="#777" stroke-width="1"/></svg>
<svg style="left:1322px;top:231px" width="36" height="36"><rect x="1" y="1" width="29" height="29" rx="6" fill="#f5eef4" stroke="#b0b0b0" stroke-width="1"/><path d="M20 28 L31 12 L34 15 L25 31Z" fill="#b7b7b7"/><path d="M15 33 C17 27 21 26 24 28 C23 32 19 34 15 33Z" fill="#b7b7b7"/></svg>
<svg style="left:1368px;top:230px" width="20" height="70">
 <path d="M3 8 L8 3 L14 9 L9 14Z" fill="none" stroke="#b0b0b0" stroke-width="1.2"/><path d="M5 1 V6" stroke="#b0b0b0" stroke-width="1.2"/><path d="M14 10 C15 12 16 13 15 14" stroke="#b0b0b0" fill="none"/>
 <path d="M1.5 30 V41.5 H13" fill="none" stroke="#b0b0b0" stroke-width="1.2"/><path d="M5 38 L15 28 L17 30 L7 40Z" fill="#c3c3c3"/>
 <path d="M2 61 L10 55 L16 58 L16 63 L8 67 L2 64Z" fill="#c7c7c7"/><path d="M2 61 L8 64 L16 58" fill="none" stroke="#f3f3f3" stroke-width="0.8"/>
</svg>
<svg style="left:1286px;top:293px" width="7" height="4"><path d="M0 0 H6 L3 3Z" fill="#555"/></svg><svg style="left:1352px;top:297px" width="7" height="4"><path d="M0 0 H6 L3 3Z" fill="#b5b5b5"/></svg><svg style="left:1448px;top:238.5px" width="7" height="4"><path d="M0 0 H6 L3 3Z" fill="#b5b5b5"/></svg><svg style="left:1475px;top:265px" width="7" height="4"><path d="M0 0 H6 L3 3Z" fill="#b5b5b5"/></svg><svg style="left:1471px;top:291px" width="7" height="4"><path d="M0 0 H6 L3 3Z" fill="#b5b5b5"/></svg><svg style="left:1481px;top:313px" width="9" height="9"><rect x="0.5" y="0.5" width="7" height="7" fill="none" stroke="#b5b5b5" stroke-width="1"/><path d="M2.5 2.5 L6 6 M6 3.5 V6 H3.5" fill="none" stroke="#aaa" stroke-width="1"/></svg><div class="t" id="t41" style="left:1264.80px;top:270.15px;font-size:14.00px;color:#262626;font-weight:normal;transform:scaleX(0.9356);">Arrange</div><div class="t" id="t42" style="left:1322.00px;top:270.15px;font-size:14.00px;color:#a6a6a6;font-weight:normal;transform:scaleX(0.9243);">Quick</div><div class="t" id="t43" style="left:1317.00px;top:288.15px;font-size:14.00px;color:#a6a6a6;font-weight:normal;transform:scaleX(0.8813);">Styles</div><div class="t" id="t44" style="left:1388.00px;top:231.65px;font-size:14.00px;color:#a6a6a6;font-weight:normal;transform:scaleX(0.9269);">Shape Fill</div><div class="t" id="t45" style="left:1388.00px;top:258.15px;font-size:14.00px;color:#a6a6a6;font-weight:normal;transform:scaleX(0.9444);">Shape Outline</div><div class="t" id="t46" style="left:1388.00px;top:284.15px;font-size:14.00px;color:#a6a6a6;font-weight:normal;transform:scaleX(0.9239);">Shape Effects</div><div class="t" id="t47" style="left:1264.50px;top:310.17px;font-size:13.50px;color:#444;font-weight:normal;transform:scaleX(0.8957);">Drawing</div><svg style="left:1508px;top:229px" width="20" height="19"><circle cx="11.5" cy="7" r="5.5" fill="none" stroke="#2f6bc0" stroke-width="1.8"/><path d="M7.5 11 L2 16.5" stroke="#2f6bc0" stroke-width="2.3"/></svg>
<svg style="left:1507px;top:254px" width="22" height="20"><text x="1" y="8" font-size="9" fill="#555" font-family="Liberation Sans">ab</text><text x="7" y="17" font-size="9" fill="#2f6bc0" font-family="Liberation Sans">ac</text><path d="M1.5 9 C1.5 13 3 14 6.5 14 M4.5 12 L6.5 14 L4.5 16" fill="none" stroke="#2f6bc0" stroke-width="1"/></svg>
<svg style="left:1512px;top:283px" width="14" height="17"><path d="M1.5 1 V13 L4.5 10.5 L7 15.5 L9 14.5 L6.8 9.8 L10.5 9.6Z" fill="#fff" stroke="#555" stroke-width="1"/></svg>
<svg style="left:1804px;top:315px" width="14" height="9"><path d="M1.5 7.5 L7 2 L12.5 7.5" fill="none" stroke="#444" stroke-width="1.1"/></svg>
<svg style="left:1589px;top:264px" width="7" height="4"><path d="M0 0 H6 L3 3Z" fill="#555"/></svg><svg style="left:1569px;top:290px" width="7" height="4"><path d="M0 0 H6 L3 3Z" fill="#555"/></svg><div class="t" id="t48" style="left:1529.45px;top:232.15px;font-size:14.00px;color:#262626;font-weight:normal;transform:scaleX(0.9509);">Find</div><div class="t" id="t49" style="left:1529.06px;top:257.95px;font-size:14.00px;color:#262626;font-weight:normal;transform:scaleX(0.9431);">Replace</div><div class="t" id="t50" style="left:1530.00px;top:283.65px;font-size:14.00px;color:#262626;font-weight:normal;transform:scaleX(0.9226);">Select</div><div class="t" id="t51" style="left:1532.49px;top:309.57px;font-size:13.50px;color:#444;font-weight:normal;transform:scaleX(0.9128);">Editing</div><div class="a" style="left:93px;top:327px;width:1734px;height:687px;background:#e3e3e3"></div><div class="a" style="left:684px;top:332px;width:837px;height:15px;background:#fff"></div><svg style="left:684px;top:332px" width="837" height="15"><text x="22.2" y="11.3" font-size="10.5" fill="#444" text-anchor="middle" font-family="Liberation Sans">12</text><text x="55.2" y="11.3" font-size="10.5" fill="#444" text-anchor="middle" font-family="Liberation Sans">11</text><text x="88.2" y="11.3" font-size="10.5" fill="#444" text-anchor="middle" font-family="Liberation Sans">10</text><text x="121.2" y="11.3" font-size="10.5" fill="#444" text-anchor="middle" font-family="Liberation Sans">9</text><text x="154.2" y="11.3" font-size="10.5" fill="#444" text-anchor="middle" font-family="Liberation Sans">8</text><text x="187.2" y="11.3" font-size="10.5" fill="#444" text-anchor="middle" font-family="Liberation Sans">7</text><text x="220.2" y="11.3" font-size="10.5" fill="#444" text-anchor="middle" font-family="Liberation Sans">6</text><text x="253.2" y="11.3" font-size="10.5" fill="#444" text-anchor="middle" font-family="Liberation Sans">5</text><text x="286.2" y="11.3" font-size="10.5" fill="#444" text-anchor="middle" font-family="Liberation Sans">4</text><text x="319.2" y="11.3" font-size="10.5" fill="#444" text-anchor="middle" font-family="Liberation Sans">3</text><text x="352.2" y="11.3" font-size="10.5" fill="#444" text-anchor="middle" font-family="Liberation Sans">2</text><text x="385.2" y="11.3" font-size="10.5" fill="#444" text-anchor="middle" font-family="Liberation Sans">1</text><text x="418.2" y="11.3" font-size="10.5" fill="#444" text-anchor="middle" font-family="Liberation Sans">0</text><text x="451.2" y="11.3" font-size="10.5" fill="#444" text-anchor="middle" font-family="Liberation Sans">1</text><text x="484.2" y="11.3" font-size="10.5" fill="#444" text-anchor="middle" font-family="Liberation Sans">2</text><text x="517.2" y="11.3" font-size="10.5" fill="#444" text-anchor="middle" font-family="Liberation Sans">3</text><text x="550.2" y="11.3" font-size="10.5" fill="#444" text-anchor="middle" font-family="Liberation Sans">4</text><text x="583.2" y="11.3" font-size="10.5" fill="#444" text-anchor="middle" font-family="Liberation Sans">5</text><text x="616.2" y="11.3" font-size="10.5" fill="#444" text-anchor="middle" font-family="Liberation Sans">6</text><text x="649.2" y="11.3" font-size="10.5" fill="#444" text-anchor="middle" font-family="Liberation Sans">7</text><text x="682.2" y="11.3" font-size="10.5" fill="#444" text-anchor="middle" font-family="Liberation Sans">8</text><text x="715.2" y="11.3" font-size="10.5" fill="#444" text-anchor="middle" font-family="Liberation Sans">9</text><text x="748.2" y="11.3" font-size="10.5" fill="#444" text-anchor="middle" font-family="Liberation Sans">10</text><text x="781.2" y="11.3" font-size="10.5" fill="#444" text-anchor="middle" font-family="Liberation Sans">11</text><text x="814.2" y="11.3" font-size="10.5" fill="#444" text-anchor="middle" font-family="Liberation Sans">12</text><rect x="5.2" y="4.5" width="1.1" height="6" fill="#555"/><rect x="38.2" y="4.5" width="1.1" height="6" fill="#555"/><rect x="71.2" y="4.5" width="1.1" height="6" fill="#555"/><rect x="104.2" y="4.5" width="1.1" height="6" fill="#555"/><rect x="137.2" y="4.5" width="1.1" height="6" fill="#555"/><rect x="170.2" y="4.5" width="1.1" height="6" fill="#555"/><rect x="203.2" y="4.5" width="1.1" height="6" fill="#555"/><rect x="236.2" y="4.5" width="1.1" height="6" fill="#555"/><rect x="269.2" y="4.5" width="1.1" height="6" fill="#555"/><rect x="302.2" y="4.5" width="1.1" height="6" fill="#555"/><rect x="335.2" y="4.5" width="1.1" height="6" fill="#555"/><rect x="368.2" y="4.5" width="1.1" height="6" fill="#555"/><rect x="401.2" y="4.5" width="1.1" height="6" fill="#555"/><rect x="434.2" y="4.5" width="1.1" height="6" fill="#555"/><rect x="467.2" y="4.5" width="1.1" height="6" fill="#555"/><rect x="500.2" y="4.5" width="1.1" height="6" fill="#555"/><rect x="533.2" y="4.5" width="1.1" height="6" fill="#555"/><rect x="566.2" y="4.5" width="1.1" height="6" fill="#555"/><rect x="599.2" y="4.5" width="1.1" height="6" fill="#555"/><rect x="632.2" y="4.5" width="1.1" height="6" fill="#555"/><rect x="665.2" y="4.5" width="1.1" height="6" fill="#555"/><rect x="698.2" y="4.5" width="1.1" height="6" fill="#555"/><rect x="731.2" y="4.5" width="1.1" height="6" fill="#555"/><rect x="764.2" y="4.5" width="1.1" height="6" fill="#555"/><rect x="797.2" y="4.5" width="1.1" height="6" fill="#555"/><rect x="830.2" y="4.5" width="1.1" height="6" fill="#555"/><rect x="13.5" y="7" width="1" height="1" fill="#888"/><rect x="30.0" y="7" width="1" height="1" fill="#888"/><rect x="46.5" y="7" width="1" height="1" fill="#888"/><rect x="63.0" y="7" width="1" height="1" fill="#888"/><rect x="79.5" y="7" width="1" height="1" fill="#888"/><rect x="96.0" y="7" width="1" height="1" fill="#888"/><rect x="112.5" y="7" width="1" height="1" fill="#888"/><rect x="129.0" y="7" width="1" height="1" fill="#888"/><rect x="145.5" y="7" width="1" height="1" fill="#888"/><rect x="162.0" y="7" width="1" height="1" fill="#888"/><rect x="178.5" y="7" width="1" height="1" fill="#888"/><rect x="195.0" y="7" width="1" height="1" fill="#888"/><rect x="211.5" y="7" width="1" height="1" fill="#888"/><rect x="228.0" y="7" width="1" height="1" fill="#888"/><rect x="244.5" y="7" width="1" height="1" fill="#888"/><rect x="261.0" y="7" width="1" height="1" fill="#888"/><rect x="277.5" y="7" width="1" height="1" fill="#888"/><rect x="294.0" y="7" width="1" height="1" fill="#888"/><rect x="310.5" y="7" width="1" height="1" fill="#888"/><rect x="327.0" y="7" width="1" height="1" fill="#888"/><rect x="343.5" y="7" width="1" height="1" fill="#888"/><rect x="360.0" y="7" width="1" height="1" fill="#888"/><rect x="376.5" y="7" width="1" height="1" fill="#888"/><rect x="393.0" y="7" width="1" height="1" fill="#888"/><rect x="409.5" y="7" width="1" height="1" fill="#888"/><rect x="426.0" y="7" width="1" height="1" fill="#888"/><rect x="442.5" y="7" width="1" height="1" fill="#888"/><rect x="459.0" y="7" width="1" height="1" fill="#888"/><rect x="475.5" y="7" width="1" height="1" fill="#888"/><rect x="492.0" y="7" width="1" height="1" fill="#888"/><rect x="508.5" y="7" width="1" height="1" fill="#888"/><rect x="525.0" y="7" width="1" height="1" fill="#888"/><rect x="541.5" y="7" width="1" height="1" fill="#888"/><rect x="558.0" y="7" width="1" height="1" fill="#888"/><rect x="574.5" y="7" width="1" height="1" fill="#888"/><rect x="591.0" y="7" width="1" height="1" fill="#888"/><rect x="607.5" y="7" width="1" height="1" fill="#888"/><rect x="624.0" y="7" width="1" height="1" fill="#888"/><rect x="640.5" y="7" width="1" height="1" fill="#888"/><rect x="657.0" y="7" width="1" height="1" fill="#888"/><rect x="673.5" y="7" width="1" height="1" fill="#888"/><rect x="690.0" y="7" width="1" height="1" fill="#888"/><rect x="706.5" y="7" width="1" height="1" fill="#888"/><rect x="723.0" y="7" width="1" height="1" fill="#888"/><rect x="739.5" y="7" width="1" height="1" fill="#888"/><rect x="756.0" y="7" width="1" height="1" fill="#888"/><rect x="772.5" y="7" width="1" height="1" fill="#888"/><rect x="789.0" y="7" width="1" height="1" fill="#888"/><rect x="805.5" y="7" width="1" height="1" fill="#888"/><rect x="822.0" y="7" width="1" height="1" fill="#888"/></svg><div class="a" style="left:372px;top:368px;width:15px;height:629px;background:#fff"></div><svg style="left:372px;top:368px" width="15" height="629"><text x="0" y="0" transform="translate(11.3 18.0) rotate(-90)" font-size="10.5" fill="#444" text-anchor="middle" font-family="Liberation Sans">9</text><text x="0" y="0" transform="translate(11.3 51.0) rotate(-90)" font-size="10.5" fill="#444" text-anchor="middle" font-family="Liberation Sans">8</text><text x="0" y="0" transform="translate(11.3 84.0) rotate(-90)" font-size="10.5" fill="#444" text-anchor="middle" font-family="Liberation Sans">7</text><text x="0" y="0" transform="translate(11.3 117.0) rotate(-90)" font-size="10.5" fill="#444" text-anchor="middle" font-family="Liberation Sans">6</text><text x="0" y="0" transform="translate(11.3 150.0) rotate(-90)" font-size="10.5" fill="#444" text-anchor="middle" font-family="Liberation Sans">5</text><text x="0" y="0" transform="translate(11.3 183.0) rotate(-90)" font-size="10.5" fill="#444" text-anchor="middle" font-family="Liberation Sans">4</text><text x="0" y="0" transform="translate(11.3 216.0) rotate(-90)" font-size="10.5" fill="#444" text-anchor="middle" font-family="Liberation Sans">3</text><text x="0" y="0" transform="translate(11.3 249.0) rotate(-90)" font-size="10.5" fill="#444" text-anchor="middle" font-family="Liberation Sans">2</text><text x="0" y="0" transform="translate(11.3 282.0) rotate(-90)" font-size="10.5" fill="#444" text-anchor="middle" font-family="Liberation Sans">1</text><text x="0" y="0" transform="translate(11.3 315.0) rotate(-90)" font-size="10.5" fill="#444" text-anchor="middle" font-family="Liberation Sans">0</text><text x="0" y="0" transform="translate(11.3 348.0) rotate(-90)" font-size="10.5" fill="#444" text-anchor="middle" font-family="Liberation Sans">1</text><text x="0" y="0" transform="translate(11.3 381.0) rotate(-90)" font-size="10.5" fill="#444" text-anchor="middle" font-family="Liberation Sans">2</text><text x="0" y="0" transform="translate(11.3 414.0) rotate(-90)" font-size="10.5" fill="#444" text-anchor="middle" font-family="Liberation Sans">3</text><text x="0" y="0" transform="translate(11.3 447.0) rotate(-90)" font-size="10.5" fill="#444" text-anchor="middle" font-family="Liberation Sans">4</text><text x="0" y="0" transform="translate(11.3 480.0) rotate(-90)" font-size="10.5" fill="#444" text-anchor="middle" font-family="Liberation Sans">5</text><text x="0" y="0" transform="translate(11.3 513.0) rotate(-90)" font-size="10.5" fill="#444" text-anchor="middle" font-family="Liberation Sans">6</text><text x="0" y="0" transform="translate(11.3 546.0) rotate(-90)" font-size="10.5" fill="#444" text-anchor="middle" font-family="Liberation Sans">7</text><text x="0" y="0" transform="translate(11.3 579.0) rotate(-90)" font-size="10.5" fill="#444" text-anchor="middle" font-family="Liberation Sans">8</text><text x="0" y="0" transform="translate(11.3 612.0) rotate(-90)" font-size="10.5" fill="#444" text-anchor="middle" font-family="Liberation Sans">9</text><rect x="4.5" y="1.0" width="6" height="1.1" fill="#555"/><rect x="4.5" y="34.0" width="6" height="1.1" fill="#555"/><rect x="4.5" y="67.0" width="6" height="1.1" fill="#555"/><rect x="4.5" y="100.0" width="6" height="1.1" fill="#555"/><rect x="4.5" y="133.0" width="6" height="1.1" fill="#555"/><rect x="4.5" y="166.0" width="6" height="1.1" fill="#555"/><rect x="4.5" y="199.0" width="6" height="1.1" fill="#555"/><rect x="4.5" y="232.0" width="6" height="1.1" fill="#555"/><rect x="4.5" y="265.0" width="6" height="1.1" fill="#555"/><rect x="4.5" y="298.0" width="6" height="1.1" fill="#555"/><rect x="4.5" y="331.0" width="6" height="1.1" fill="#555"/><rect x="4.5" y="364.0" width="6" height="1.1" fill="#555"/><rect x="4.5" y="397.0" width="6" height="1.1" fill="#555"/><rect x="4.5" y="430.0" width="6" height="1.1" fill="#555"/><rect x="4.5" y="463.0" width="6" height="1.1" fill="#555"/><rect x="4.5" y="496.0" width="6" height="1.1" fill="#555"/><rect x="4.5" y="529.0" width="6" height="1.1" fill="#555"/><rect x="4.5" y="562.0" width="6" height="1.1" fill="#555"/><rect x="4.5" y="595.0" width="6" height="1.1" fill="#555"/><rect x="4.5" y="628.0" width="6" height="1.1" fill="#555"/><rect x="7" y="9.2" width="1" height="1" fill="#888"/><rect x="7" y="25.8" width="1" height="1" fill="#888"/><rect x="7" y="42.2" width="1" height="1" fill="#888"/><rect x="7" y="58.8" width="1" height="1" fill="#888"/><rect x="7" y="75.2" width="1" height="1" fill="#888"/><rect x="7" y="91.8" width="1" height="1" fill="#888"/><rect x="7" y="108.2" width="1" height="1" fill="#888"/><rect x="7" y="124.8" width="1" height="1" fill="#888"/><rect x="7" y="141.2" width="1" height="1" fill="#888"/><rect x="7" y="157.8" width="1" height="1" fill="#888"/><rect x="7" y="174.2" width="1" height="1" fill="#888"/><rect x="7" y="190.8" width="1" height="1" fill="#888"/><rect x="7" y="207.2" width="1" height="1" fill="#888"/><rect x="7" y="223.8" width="1" height="1" fill="#888"/><rect x="7" y="240.2" width="1" height="1" fill="#888"/><rect x="7" y="256.8" width="1" height="1" fill="#888"/><rect x="7" y="273.2" width="1" height="1" fill="#888"/><rect x="7" y="289.8" width="1" height="1" fill="#888"/><rect x="7" y="306.2" width="1" height="1" fill="#888"/><rect x="7" y="322.8" width="1" height="1" fill="#888"/><rect x="7" y="339.2" width="1" height="1" fill="#888"/><rect x="7" y="355.8" width="1" height="1" fill="#888"/><rect x="7" y="372.2" width="1" height="1" fill="#888"/><rect x="7" y="388.8" width="1" height="1" fill="#888"/><rect x="7" y="405.2" width="1" height="1" fill="#888"/><rect x="7" y="421.8" width="1" height="1" fill="#888"/><rect x="7" y="438.2" width="1" height="1" fill="#888"/><rect x="7" y="454.8" width="1" height="1" fill="#888"/><rect x="7" y="471.2" width="1" height="1" fill="#888"/><rect x="7" y="487.8" width="1" height="1" fill="#888"/><rect x="7" y="504.2" width="1" height="1" fill="#888"/><rect x="7" y="520.8" width="1" height="1" fill="#888"/><rect x="7" y="537.2" width="1" height="1" fill="#888"/><rect x="7" y="553.8" width="1" height="1" fill="#888"/><rect x="7" y="570.2" width="1" height="1" fill="#888"/><rect x="7" y="586.8" width="1" height="1" fill="#888"/><rect x="7" y="603.2" width="1" height="1" fill="#888"/><rect x="7" y="619.8" width="1" height="1" fill="#888"/></svg><div class="a" style="left:1809px;top:329px;width:17px;height:623px;background:#dcdcdf"></div>
<div class="a" style="left:1809px;top:330px;width:16px;height:15px;background:#fff;border:1px solid #c9c9c9"></div>
<div class="a" style="left:1809px;top:808px;width:16px;height:42px;background:#fff;border:1px solid #a9a9a9"></div>
<div class="a" style="left:1809px;top:936px;width:16px;height:16px;background:#fff;border:1px solid #c9c9c9"></div>
<svg style="left:1809px;top:330px" width="17" height="660"><path d="M4.5 10.5 L8.5 5.5 L12.5 10.5Z M4.5 10.5" fill="#666"/><path d="M4.5 610.5 H12.5 L8.5 615.5Z" fill="#666"/>
<path d="M4.5 634 L8.5 629.5 L12.5 634Z M4.5 638.5 L8.5 634 L12.5 638.5Z" fill="#6a6a6a"/><path d="M4.5 647 H12.5 L8.5 651.5Z M4.5 651.5 H12.5 L8.5 656Z" fill="#6a6a6a"/></svg>
<div class="a" style="left:681px;top:367px;width:842px;height:632px;background:#fff;border:1px solid #c8c8c8"></div><div class="a" id="slidebox" style="left:682px;top:368px;width:840px;height:630px"><div class="t" id="t85" style="left:165.59px;top:59.19px;font-size:39.00px;color:#1208f8;font-weight:bold;transform:scaleX(0.9470);">Avantajele Audierilor Publice</div><div class="t" id="t86" style="left:81.80px;top:147.70px;font-size:30.60px;color:#000;font-weight:normal;">Cuprinde un auditoriu mare;</div><svg style="left:52.6px;top:150.0px" width="26" height="25"><path d="M12.4 0 L24.8 11.8 H18.2 V23.8 H6.6 V11.8 H0 Z" fill="#000"/></svg><div class="t" id="t87" style="left:81.78px;top:190.40px;font-size:30.60px;color:#000;font-weight:normal;transform:scaleX(1.0140);">Oferă oportunităţi pentru comentarii publice;</div><svg style="left:52.6px;top:192.7px" width="26" height="25"><path d="M12.4 0 L24.8 11.8 H18.2 V23.8 H6.6 V11.8 H0 Z" fill="#000"/></svg><div class="t" id="t88" style="left:81.79px;top:233.90px;font-size:30.60px;color:#000;font-weight:normal;transform:scaleX(1.0047);">Oferă un for limitat pentru prezentarea informaţiei</div><svg style="left:52.6px;top:236.2px" width="26" height="25"><path d="M12.4 0 L24.8 11.8 H18.2 V23.8 H6.6 V11.8 H0 Z" fill="#000"/></svg><div class="t" id="t89" style="left:81.79px;top:269.30px;font-size:30.60px;color:#000;font-weight:normal;transform:scaleX(1.0114);">de către funcţionarii publici;</div><div class="t" id="t90" style="left:80.79px;top:312.50px;font-size:30.60px;color:#000;font-weight:normal;transform:scaleX(1.0039);">Permite liderilor comunităţii să-şi exprime opiniile;</div><svg style="left:52.6px;top:314.8px" width="26" height="25"><path d="M12.4 0 L24.8 11.8 H18.2 V23.8 H6.6 V11.8 H0 Z" fill="#000"/></svg><div class="t" id="t91" style="left:80.82px;top:354.90px;font-size:30.60px;color:#000;font-weight:normal;transform:scaleX(0.9896);">Metodă necostisitoare de a solicita opinia publică;</div><svg style="left:52.6px;top:357.2px" width="26" height="25"><path d="M12.4 0 L24.8 11.8 H18.2 V23.8 H6.6 V11.8 H0 Z" fill="#000"/></svg><div class="t" id="t92" style="left:80.80px;top:398.60px;font-size:30.60px;color:#000;font-weight:normal;transform:scaleX(0.9977);">Metodă de testare a susţinerii publice;</div><svg style="left:52.6px;top:400.9px" width="26" height="25"><path d="M12.4 0 L24.8 11.8 H18.2 V23.8 H6.6 V11.8 H0 Z" fill="#000"/></svg><div class="t" id="t93" style="left:80.81px;top:441.10px;font-size:30.60px;color:#000;font-weight:normal;transform:scaleX(0.9945);">Posibilitatea de idei noi;</div><svg style="left:52.6px;top:443.4px" width="26" height="25"><path d="M12.4 0 L24.8 11.8 H18.2 V23.8 H6.6 V11.8 H0 Z" fill="#000"/></svg><div class="t" id="t94" style="left:81.81px;top:484.90px;font-size:30.60px;color:#000;font-weight:normal;transform:scaleX(0.9885);">Conştientizarea diferitor puncte de vedere.</div><svg style="left:52.6px;top:487.2px" width="26" height="25"><path d="M12.4 0 L24.8 11.8 H18.2 V23.8 H6.6 V11.8 H0 Z" fill="#000"/></svg></div><svg style="left:806px;top:555px" width="9" height="17"><path d="M1.5 1 H3.5 C4 1 4.5 1.5 4.5 2 V15 C4.5 15.5 4 16 3.5 16 H1.5 M7.5 1 H5.5 C5 1 4.5 1.5 4.5 2 M7.5 16 H5.5 C5 16 4.5 15.5 4.5 15" fill="none" stroke="#444" stroke-width="0.9"/></svg><div class="a" style="left:0;top:0;width:1920px;height:1080px;clip-path:inset(327px 1555px 66px 93px)"><div class="a" style="left:344px;top:329px;width:17px;height:685px;background:#d9d9dc"></div>
<div class="a" style="left:344px;top:330px;width:17px;height:15px;background:#fff"></div>
<svg style="left:344px;top:330px" width="17" height="15"><path d="M4.5 10.5 L8.5 5.5 L12.5 10.5Z" fill="#666"/></svg>
<div class="a" style="left:344px;top:821px;width:17px;height:200px;background:#fff;border:1px solid #a9a9a9"></div>
<div class="a" style="left:365px;top:329px;width:1px;height:685px;background:#c2c2c2"></div>
<div class="a" style="left:132.5px;top:300.0px;width:189.5px;height:64.0px;background:#fff;border:1px solid #cdcdcd"></div><div class="a" style="left:132.5px;top:386.7px;width:189.5px;height:141.6px;background:#fff;border:1px solid #cdcdcd"></div><div class="a" style="left:132.5px;top:714.4px;width:189.5px;height:143.0px;background:#fff;border:1px solid #cdcdcd"></div><div class="a" style="left:132.5px;top:879.4px;width:189.5px;height:150.6px;background:#fff;border:1px solid #cdcdcd"></div><div class="a" style="left:130px;top:548px;width:194px;height:146px;border:2.6px solid #e2674a;background:#fff"></div><div class="a" style="left:93px;top:1014px;width:280px;height:10px;background:#1a1a1a"></div><div class="t" id="t52" style="left:97.21px;top:384.28px;font-size:15.50px;color:#555;font-weight:normal;transform:scaleX(1.0850);">11</div><div class="t" id="t53" style="left:97.29px;top:548.58px;font-size:15.50px;color:#c4432a;font-weight:normal;transform:scaleX(1.0051);">12</div><div class="t" id="t54" style="left:97.29px;top:712.88px;font-size:15.50px;color:#555;font-weight:normal;transform:scaleX(1.0051);">13</div><div class="t" id="t55" style="left:97.36px;top:876.88px;font-size:15.50px;color:#555;font-weight:normal;transform:scaleX(0.9446);">14</div><div class="t" id="t56" style="left:144.70px;top:322.41px;font-size:7.20px;color:#626262;font-weight:normal;transform:scaleX(0.9632);">10. Vorbitorii care au propuneri în scris sunt rugaţi să</div><div class="t" id="t57" style="left:144.70px;top:332.61px;font-size:7.20px;color:#626262;font-weight:normal;transform:scaleX(0.9398);">le prezinte secretarului şedinţei;</div><div class="t" id="t58" style="left:144.70px;top:343.41px;font-size:7.20px;color:#626262;font-weight:normal;transform:scaleX(0.9338);">11. Propunerile nu trebuie să fie repetate;</div><div class="t" id="t59" style="left:144.70px;top:353.91px;font-size:7.20px;color:#626262;font-weight:normal;transform:scaleX(0.9091);">12. Toate propunerile se înregistrează de către secretar.</div><div class="t" id="t60" style="left:178.60px;top:402.18px;font-size:9.00px;color:#1208f8;font-weight:bold;transform:scaleX(0.8893);">Ce urmează după şedinţa</div><div class="t" id="t61" style="left:189.80px;top:414.38px;font-size:9.00px;color:#1208f8;font-weight:bold;transform:scaleX(0.8932);">de Audieri Publice?</div><div class="t" id="t62" style="left:152.20px;top:429.67px;font-size:6.30px;color:#626262;font-weight:normal;transform:scaleX(0.9968);">Toate propunerile lansate în cadrul audierilor publice</div><div class="a" style="left:146px;top:431.8px;width:2px;height:2px;background:#555"></div><div class="t" id="t63" style="left:152.20px;top:438.17px;font-size:6.30px;color:#626262;font-weight:normal;transform:scaleX(0.9756);">sunt înregistrate;</div><div class="t" id="t64" style="left:152.20px;top:447.67px;font-size:6.30px;color:#626262;font-weight:normal;transform:scaleX(0.9779);">Ele sunt analizate de grupul de lucru (reprezentanţii APL,</div><div class="a" style="left:146px;top:449.8px;width:2px;height:2px;background:#555"></div><div class="t" id="t65" style="left:152.20px;top:456.17px;font-size:6.30px;color:#626262;font-weight:normal;transform:scaleX(0.9543);">experţi, ONG, etc.);</div><div class="t" id="t66" style="left:152.20px;top:465.67px;font-size:6.30px;color:#626262;font-weight:normal;transform:scaleX(0.9599);">Propunerile relevante vor fi incluse în documentul</div><div class="a" style="left:146px;top:467.8px;width:2px;height:2px;background:#555"></div><div class="t" id="t67" style="left:152.20px;top:474.17px;font-size:6.30px;color:#626262;font-weight:normal;transform:scaleX(0.9558);">consultat;</div><div class="t" id="t68" style="left:152.20px;top:483.67px;font-size:6.30px;color:#626262;font-weight:normal;">Ulterior textul completat al documentului va fi discutat în</div><div class="a" style="left:146px;top:485.8px;width:2px;height:2px;background:#555"></div><div class="t" id="t69" style="left:152.20px;top:492.17px;font-size:6.30px;color:#626262;font-weight:normal;transform:scaleX(0.9717);">cadrul grupurilor de lucru cu participarea</div><div class="t" id="t70" style="left:152.20px;top:500.17px;font-size:6.30px;color:#626262;font-weight:normal;transform:scaleX(0.9932);">reprezentanţilor APL;</div><div class="t" id="t71" style="left:153.12px;top:509.67px;font-size:6.30px;color:#626262;font-weight:normal;transform:scaleX(0.9190);">În decurs de 2-3 săptămâni documentul este dat</div><div class="a" style="left:146px;top:511.8px;width:2px;height:2px;background:#555"></div><div class="t" id="t72" style="left:152.20px;top:518.17px;font-size:6.30px;color:#626262;font-weight:normal;transform:scaleX(1.0118);">publicităţii.</div><div class="t" id="t73" style="left:150.90px;top:733.12px;font-size:8.60px;color:#1208f8;font-weight:bold;transform:scaleX(0.9561);">De ce sunt atât de importante Audierile</div><div class="t" id="t74" style="left:209.80px;top:744.42px;font-size:8.60px;color:#1208f8;font-weight:bold;transform:scaleX(0.9090);">Publice ?</div><div class="t" id="t75" style="left:151.80px;top:759.67px;font-size:6.30px;color:#626262;font-weight:normal;transform:scaleX(1.2242);">Să informăm cetăţenii despre politicile publice</div><div class="a" style="left:145.5px;top:761.8px;width:2px;height:2px;background:#555"></div><div class="t" id="t76" style="left:151.80px;top:766.97px;font-size:6.30px;color:#626262;font-weight:normal;transform:scaleX(1.0422);">elaborate şi lansate;</div><div class="t" id="t77" style="left:151.80px;top:776.87px;font-size:6.30px;color:#626262;font-weight:normal;transform:scaleX(1.1037);">Să obţinem acordul cetăţenilor asupra direcţiilor de</div><div class="a" style="left:145.5px;top:779.0px;width:2px;height:2px;background:#555"></div><div class="t" id="t78" style="left:151.80px;top:784.87px;font-size:6.30px;color:#626262;font-weight:normal;transform:scaleX(0.9720);">dezvoltare propuse;</div><div class="t" id="t79" style="left:151.80px;top:794.77px;font-size:6.30px;color:#626262;font-weight:normal;transform:scaleX(1.0823);">Să obţinem încrederea cetăţenilor şi dorinţa lor de a</div><div class="a" style="left:145.5px;top:796.9px;width:2px;height:2px;background:#555"></div><div class="t" id="t80" style="left:151.80px;top:802.97px;font-size:6.30px;color:#626262;font-weight:normal;transform:scaleX(1.1460);">participa la realizarea politicilor publice iniţiate de</div><div class="t" id="t81" style="left:151.80px;top:810.67px;font-size:6.30px;color:#626262;font-weight:normal;transform:scaleX(1.0309);">administraţia publică locală;</div><div class="t" id="t82" style="left:151.80px;top:819.97px;font-size:6.30px;color:#626262;font-weight:normal;transform:scaleX(1.0885);">Să obţinem contribuţia şi opiniile cetăţenilor;</div><div class="a" style="left:145.5px;top:822.1px;width:2px;height:2px;background:#555"></div><div class="t" id="t83" style="left:151.80px;top:829.87px;font-size:6.30px;color:#626262;font-weight:normal;transform:scaleX(1.0235);">Să realizăm coeziunea socială la nivel local.</div><div class="a" style="left:145.5px;top:832.0px;width:2px;height:2px;background:#555"></div><div class="t" id="t84" style="left:169.20px;top:893.42px;font-size:8.60px;color:#1208f8;font-weight:bold;transform:scaleX(0.9637);">Vă mulţumesc pentru atenţie!</div><div class="a" style="left:143px;top:913px;width:141.5px;height:89px;overflow:hidden;background:#5e6d52">
<svg style="left:0;top:0" width="142" height="89"><defs><filter id="blp" x="-5%" y="-5%" width="110%" height="110%"><feGaussianBlur stdDeviation="0.55"/></filter><linearGradient id="gp" x1="0" x2="1"><stop offset="0" stop-color="#56654c"/><stop offset="0.35" stop-color="#637256"/><stop offset="0.7" stop-color="#77885f"/><stop offset="0.85" stop-color="#8a9a70"/><stop offset="1" stop-color="#6a7a5c"/></linearGradient></defs>
<g filter="url(#blp)">
<rect x="-3" y="-3" width="148" height="95" fill="url(#gp)"/>
<rect x="-3" y="-3" width="148" height="4.5" fill="#262a24"/>
<path d="M9 1 L21 1 L2 52 L-3 52 L-3 28 Z" fill="#8aa3a8"/>
<rect x="22" y="22" width="20.5" height="13.5" fill="#f2f4f0"/><rect x="21" y="21" width="22.5" height="15.5" fill="none" stroke="#30352e" stroke-width="1"/>
<rect x="44" y="42" width="14" height="19" fill="#cfd3c0"/>
<rect x="128" y="30" width="14" height="32" fill="#b9c0a8"/><rect x="125" y="55" width="17" height="10" fill="#7f8c78"/>
<path d="M-3 62 L20 58 L48 60 L62 66 L62 92 L-3 92 Z" fill="#6e625a"/>
<circle cx="5" cy="66" r="4" fill="#5a3a30"/><circle cx="17" cy="62" r="3.5" fill="#3a3a34"/><circle cx="26" cy="70" r="4" fill="#4a3028"/><circle cx="37" cy="64" r="3.5" fill="#9a7a64"/><circle cx="48" cy="69" r="3.5" fill="#c6a888"/>
<rect x="-3" y="72" width="14" height="20" fill="#c89a90"/><rect x="2" y="80" width="10" height="12" fill="#a8b0c8"/>
<rect x="20" y="74" width="12" height="18" fill="#a84a44"/><rect x="32" y="77" width="12" height="15" fill="#6c5a50"/>
<path d="M28 89 L46 80 L62 82 L62 92 L26 92Z" fill="#d8d6d0"/>
<path d="M55 56 L81 57 L80 62 L56 62 Z" fill="#cf8e6e"/><rect x="63" y="62" width="11" height="28" fill="#c8846a"/>
<path d="M70 50 L86 42" stroke="#303030" stroke-width="1.3"/><rect x="70" y="46" width="6" height="5" fill="#2a2a30"/>
<rect x="85" y="57" width="9" height="28" rx="3" fill="#2a2a2e"/>
<path d="M93 42 C96 36 106 36 110 40 L113 60 L112 89 L96 89 L94 62 Z" fill="#22252c"/>
<path d="M76 32 L92 40 L96 44 L93 47 L76 35 Z" fill="#2a2d34"/><circle cx="76" cy="32.5" r="2.2" fill="#d9c2b0"/>
<ellipse cx="103" cy="32" rx="4.8" ry="6.3" fill="#c9a898"/><path d="M98 28 C99 24 107 24 108 28 L108 30 L98 30Z" fill="#4a4038"/>
<rect x="113" y="58" width="18" height="28" fill="#e6e6de"/><rect x="115" y="61" width="7" height="4" fill="#c9463a"/><rect x="119" y="68" width="2" height="8" fill="#3a3a3a"/><rect x="124" y="68" width="2" height="8" fill="#3a3a3a"/>
<rect x="133" y="58" width="9" height="31" fill="#6a3234"/>
<rect x="-3" y="86" width="148" height="6" fill="#2f6a66"/>
</g></svg>
</div></div><div class="a" style="left:133px;top:551px;width:840px;height:630px;transform:scale(0.2238);transform-origin:0 0"><div class="a" style="left:0;top:0;width:840px;height:630px"><div class="t" style="left:165.59px;top:59.19px;font-size:39.00px;color:#1208f8;font-weight:bold;transform:scaleX(0.9470);">Avantajele Audierilor Publice</div><div class="t" style="left:81.80px;top:147.70px;font-size:30.60px;color:#000;font-weight:normal;">Cuprinde un auditoriu mare;</div><svg style="left:52.6px;top:150.0px" width="26" height="25"><path d="M12.4 0 L24.8 11.8 H18.2 V23.8 H6.6 V11.8 H0 Z" fill="#000"/></svg><div class="t" style="left:81.78px;top:190.40px;font-size:30.60px;color:#000;font-weight:normal;transform:scaleX(1.0140);">Oferă oportunităţi pentru comentarii publice;</div><svg style="left:52.6px;top:192.7px" width="26" height="25"><path d="M12.4 0 L24.8 11.8 H18.2 V23.8 H6.6 V11.8 H0 Z" fill="#000"/></svg><div class="t" style="left:81.79px;top:233.90px;font-size:30.60px;color:#000;font-weight:normal;transform:scaleX(1.0047);">Oferă un for limitat pentru prezentarea informaţiei</div><svg style="left:52.6px;top:236.2px" width="26" height="25"><path d="M12.4 0 L24.8 11.8 H18.2 V23.8 H6.6 V11.8 H0 Z" fill="#000"/></svg><div class="t" style="left:81.79px;top:269.30px;font-size:30.60px;color:#000;font-weight:normal;transform:scaleX(1.0114);">de către funcţionarii publici;</div><div class="t" style="left:80.79px;top:312.50px;font-size:30.60px;color:#000;font-weight:normal;transform:scaleX(1.0039);">Permite liderilor comunităţii să-şi exprime opiniile;</div><svg style="left:52.6px;top:314.8px" width="26" height="25"><path d="M12.4 0 L24.8 11.8 H18.2 V23.8 H6.6 V11.8 H0 Z" fill="#000"/></svg><div class="t" style="left:80.82px;top:354.90px;font-size:30.60px;color:#000;font-weight:normal;transform:scaleX(0.9896);">Metodă necostisitoare de a solicita opinia publică;</div><svg style="left:52.6px;top:357.2px" width="26" height="25"><path d="M12.4 0 L24.8 11.8 H18.2 V23.8 H6.6 V11.8 H0 Z" fill="#000"/></svg><div class="t" style="left:80.80px;top:398.60px;font-size:30.60px;color:#000;font-weight:normal;transform:scaleX(0.9977);">Metodă de testare a susţinerii publice;</div><svg style="left:52.6px;top:400.9px" width="26" height="25"><path d="M12.4 0 L24.8 11.8 H18.2 V23.8 H6.6 V11.8 H0 Z" fill="#000"/></svg><div class="t" style="left:80.81px;top:441.10px;font-size:30.60px;color:#000;font-weight:normal;transform:scaleX(0.9945);">Posibilitatea de idei noi;</div><svg style="left:52.6px;top:443.4px" width="26" height="25"><path d="M12.4 0 L24.8 11.8 H18.2 V23.8 H6.6 V11.8 H0 Z" fill="#000"/></svg><div class="t" style="left:81.81px;top:484.90px;font-size:30.60px;color:#000;font-weight:normal;transform:scaleX(0.9885);">Conştientizarea diferitor puncte de vedere.</div><svg style="left:52.6px;top:487.2px" width="26" height="25"><path d="M12.4 0 L24.8 11.8 H18.2 V23.8 H6.6 V11.8 H0 Z" fill="#000"/></svg></div></div><div class="a" style="left:93px;top:223px;width:1734px;height:103px;background:transparent"></div><div class="a" style="left:0;top:1014px;width:1920px;height:63px;background:#1a1a1a"></div>
<div class="a" style="left:0;top:1077px;width:1920px;height:1px;background:#6a6a6a"></div><div class="a" style="left:0;top:1078px;width:1920px;height:2px;background:#dcdcdc"></div>
<svg style="left:48px;top:1019px" width="36" height="36">
 <rect x="12" y="3" width="10" height="19.5" rx="5" fill="#a8a8a8"/>
 <path d="M8.4 15.5 A8.6 8.6 0 0 0 25.6 15.5" fill="none" stroke="#a8a8a8" stroke-width="1.7"/>
 <path d="M17 24 V29.5" stroke="#a8a8a8" stroke-width="1.8"/><rect x="12.4" y="29" width="9.4" height="2.2" rx="0.8" fill="#a8a8a8"/>
 <path d="M2.8 30.9 L31.1 2.6" stroke="#1a1a1a" stroke-width="3.8"/>
 <path d="M2.8 30.9 L31.1 2.6" stroke="#f05f60" stroke-width="1.8" stroke-linecap="round"/>
</svg>
<svg style="left:105.5px;top:1030.5px" width="14" height="10"><path d="M2 7.5 L6.5 3 L11 7.5" fill="none" stroke="#bdbdbd" stroke-width="1.6"/></svg>
<svg style="left:186px;top:1026px" width="32" height="20"><rect x="1" y="1" width="21" height="18.3" rx="4.5" fill="#a8a8a8"/><path d="M24.2 8 Q24.2 6.5 25.5 6 L30 2.6 Q31 2.2 31 3.5 V16.5 Q31 17.8 30 17.3 L25.5 14 Q24.2 13.5 24.2 12 Z" fill="#a8a8a8"/></svg>
<svg style="left:253.7px;top:1030.8px" width="14" height="10"><path d="M2 7.5 L6.5 3 L11 7.5" fill="none" stroke="#bdbdbd" stroke-width="1.6"/></svg>
<svg style="left:781px;top:1025px" width="32" height="24">
 <circle cx="21.7" cy="7.3" r="4.6" fill="#a8a8a8"/>
 <path d="M19.5 22.2 C18.5 22.2 18.5 20 18.5 19 C18.5 16 20 14.6 23.5 14.6 C27.5 14.6 30 16 30 19.5 C30 21.5 29 22.2 26 22.2Z" fill="#a8a8a8"/>
 <path d="M0 18.3 C0 14 3.5 12.6 9.5 12.6 C15.5 12.6 19.2 14 19.2 18.3 C19.2 21.5 17 22.3 9.5 22.3 C2 22.3 0 21.5 0 18.3Z" fill="#1a1a1a" stroke="#1a1a1a" stroke-width="2.2"/>
 <circle cx="9.3" cy="5.3" r="5" fill="#a8a8a8"/>
 <path d="M0 18.3 C0 14 3.5 12.6 9.5 12.6 C15.5 12.6 19.2 14 19.2 18.3 C19.2 21.5 17 22.3 9.5 22.3 C2 22.3 0 21.5 0 18.3Z" fill="#a8a8a8"/>
</svg>
<svg style="left:855px;top:1030px" width="14" height="10"><path d="M2 7.5 L6.5 3 L11 7.5" fill="none" stroke="#bdbdbd" stroke-width="1.6"/></svg>
<svg style="left:914px;top:1024px" width="28" height="26"><path d="M6 0.5 H20 C24 0.5 26.5 3 26.5 7 V11 C26.5 15 24 17.5 20 17.5 H11 L6.5 22.5 V17.5 C3 17 0.5 15 0.5 11 V7 C0.5 3 2.5 0.5 6 0.5Z" fill="#a8a8a8"/></svg>
<div class="a" style="left:932px;top:1017px;width:20px;height:18px;border-radius:5px;background:#e8373e"></div>
<div class="a" style="left:1051px;top:1025px;width:30px;height:22px;border-radius:3px;background:#25d162"></div>
<svg style="left:1051px;top:1025px" width="30" height="22"><path d="M15 17 V6 M10.5 10 L15 5.5 L19.5 10" fill="none" stroke="#111" stroke-width="2.1"/></svg>
<svg style="left:1190px;top:1021px" width="30" height="30"><circle cx="15" cy="15" r="11.6" fill="none" stroke="#a8a8a8" stroke-width="1.6"/><circle cx="15" cy="15" r="9.4" fill="#a8a8a8"/></svg>
<svg style="left:1290px;top:1018px" width="34" height="34"><circle cx="15" cy="18" r="11" fill="#a8a8a8"/><path d="M10.5 20 a4.5 4.5 0 0 0 9 0" fill="none" stroke="#1a1a1a" stroke-width="1.6"/><circle cx="11.5" cy="15.5" r="1.4" fill="#1a1a1a"/><circle cx="18.5" cy="15.5" r="1.4" fill="#1a1a1a"/><path d="M26.5 3 v9 M22 7.5 h9" stroke="#a8a8a8" stroke-width="1.6"/></svg>
<div class="a" style="left:1828px;top:1030px;width:77px;height:33px;border-radius:6px;background:#c0232c"></div>
<div class="t" id="t95" style="left:12.75px;top:1058.20px;font-size:15.00px;color:#cfcfcf;font-weight:normal;transform:scaleX(1.0455);">Включить звук</div><div class="t" id="t96" style="left:137.59px;top:1058.20px;font-size:15.00px;color:#cfcfcf;font-weight:normal;transform:scaleX(1.0041);">Остановить видео</div><div class="t" id="t97" style="left:759.00px;top:1058.20px;font-size:15.00px;color:#cfcfcf;font-weight:normal;transform:scaleX(1.0311);">Участники</div><div class="t" id="t98" style="left:817.00px;top:1026.43px;font-size:14.50px;color:#cfcfcf;font-weight:normal;transform:scaleX(0.8715);">21</div><div class="t" id="t99" style="left:915.64px;top:1058.20px;font-size:15.00px;color:#cfcfcf;font-weight:normal;transform:scaleX(0.9579);">Чат</div><div class="t" id="t100" style="left:988.00px;top:1058.20px;font-size:15.00px;color:#25d162;font-weight:normal;transform:scaleX(1.0134);">Демонстрация экрана</div><div class="t" id="t101" style="left:1180.30px;top:1058.20px;font-size:15.00px;color:#cfcfcf;font-weight:normal;transform:scaleX(0.9918);">Запись</div><div class="t" id="t102" style="left:1273.96px;top:1058.20px;font-size:15.00px;color:#cfcfcf;font-weight:normal;transform:scaleX(1.0431);">Реакции</div><div class="t" id="t103" style="left:936.50px;top:1020.00px;font-size:13.00px;color:#fff;font-weight:bold;transform:scaleX(1.1250);">4</div><div class="t" id="t104" style="left:1841.75px;top:1039.30px;font-size:15.00px;color:#fff;font-weight:bold;transform:scaleX(0.9542);">Выйти</div></body></html>
